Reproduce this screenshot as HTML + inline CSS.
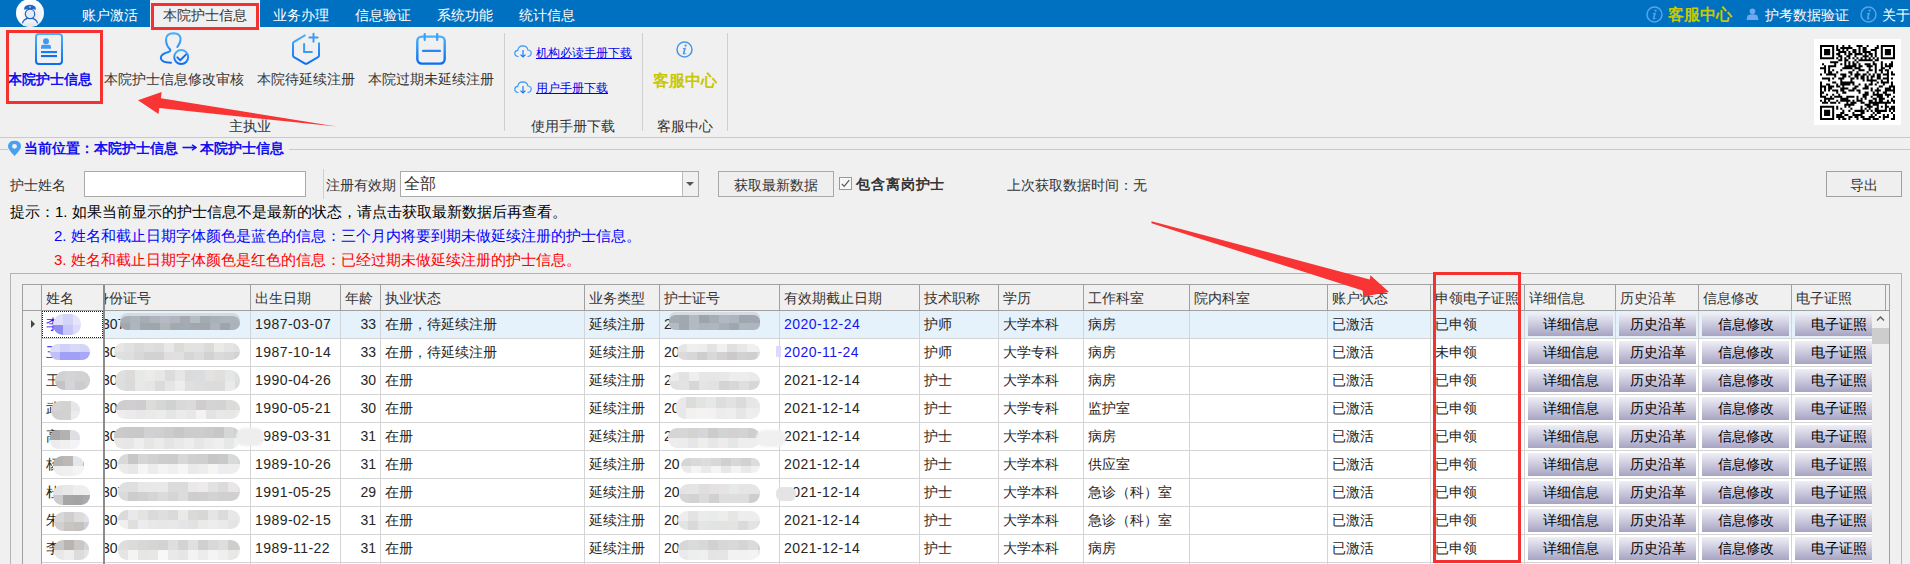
<!DOCTYPE html><html><head><meta charset="utf-8"><style>
*{box-sizing:border-box;margin:0;padding:0}
html,body{width:1910px;height:564px;overflow:hidden;background:#f0f0f0;font-family:"Liberation Sans",sans-serif;color:#333;position:relative}
.ab{position:absolute;white-space:nowrap}
.t14{font-size:14px;line-height:16px}
.vl{position:absolute;width:1px;background:#d4d4d4}
.hl{position:absolute;height:1px;background:#d4d4d4}
.btn{position:absolute;height:23px;background:linear-gradient(#efeff7,#a7a4c3);font-size:14px;line-height:22px;text-align:center;color:#000}
.cell{position:absolute;font-size:14px;line-height:16px;color:#262626;white-space:nowrap}
.hd{position:absolute;font-size:14px;line-height:16px;color:#333;white-space:nowrap}
.blur{position:absolute;border-radius:9px;filter:blur(1.2px)}
</style></head><body>

<div class="ab" style="left:0;top:0;width:1910px;height:27px;background:#0071c1"></div>
<svg class="ab" style="left:14px;top:-1px" width="32" height="29" viewBox="0 0 32 29">
<defs><radialGradient id="av" cx="0.62" cy="0.62" r="0.55"><stop offset="0" stop-color="#e4e8ef"/><stop offset="1" stop-color="#fff"/></radialGradient>
<linearGradient id="bd" x1="0" y1="0" x2="0" y2="1"><stop offset="0" stop-color="#f4f6f9"/><stop offset="1" stop-color="#e0e4ea"/></linearGradient></defs>
<circle cx="16" cy="14" r="14" fill="url(#av)"/>
<path d="M9 27 L9.3 24 A8.2 7.6 0 0 1 22.7 24 L23 27 Z" fill="url(#bd)"/>
<path d="M8.3 24.2 A8.2 7.6 0 0 1 23.7 24.2" fill="none" stroke="#1f66c4" stroke-width="1.3"/>
<circle cx="16" cy="14.9" r="4.7" fill="#e6ebf3" stroke="#1f66c4" stroke-width="1.2"/>
<path d="M10.2 10.8 Q9.4 6.2 16 5.8 Q22.6 6.2 21.8 10.8 Q16 9.2 10.2 10.8 Z" fill="#1f66c4"/>
<ellipse cx="16" cy="7.9" rx="1.1" ry="0.9" fill="#9cc0ee"/>
</svg>
<div class="ab t14" style="left:82px;top:7px;color:#fff">账户激活</div>
<div class="ab t14" style="left:273px;top:7px;color:#fff">业务办理</div>
<div class="ab t14" style="left:355px;top:7px;color:#fff">信息验证</div>
<div class="ab t14" style="left:437px;top:7px;color:#fff">系统功能</div>
<div class="ab t14" style="left:519px;top:7px;color:#fff">统计信息</div>
<div class="ab" style="left:150px;top:0;width:110px;height:27px;background:#f0f0f0"></div>
<div class="ab t14" style="left:163px;top:7px;color:#333">本院护士信息</div>
<div class="ab" style="left:151px;top:3px;width:108px;height:27px;border:3px solid #f5312f"></div>
<svg class="ab" style="left:1646px;top:6px" width="17" height="17" viewBox="0 0 17 17"><circle cx="8.5" cy="8.5" r="7.5" fill="none" stroke="#5aa2ea" stroke-width="1.5" opacity="1"/><circle cx="9.6" cy="4.6" r="1.15" fill="#5aa2ea"/><path d="M7 7 L10 6.8 L8.6 11.8 Q8.4 12.6 9.2 12.4 L10.2 11.8 L10.3 12.4 Q9 13.5 7.6 13.5 Q6.5 13.4 6.9 12 L7.9 8 L6.9 8 Z" fill="#5aa2ea"/></svg>
<div class="ab" style="left:1668px;top:6px;font-size:16px;line-height:18px;font-weight:bold;color:#c8c800">客服中心</div>
<svg class="ab" style="left:1746px;top:8px" width="13" height="12" viewBox="0 0 13 12"><circle cx="6.5" cy="3.2" r="2.8" fill="#6fa8ee"/><path d="M0.5 12 L1.5 7.5 Q6.5 5 11.5 7.5 L12.5 12 Z" fill="#6fa8ee"/></svg>
<div class="ab t14" style="left:1765px;top:7px;color:#fff">护考数据验证</div>
<svg class="ab" style="left:1860px;top:6px" width="17" height="17" viewBox="0 0 17 17"><circle cx="8.5" cy="8.5" r="7.5" fill="none" stroke="#5aa2ea" stroke-width="1.5" opacity="1"/><circle cx="9.6" cy="4.6" r="1.15" fill="#5aa2ea"/><path d="M7 7 L10 6.8 L8.6 11.8 Q8.4 12.6 9.2 12.4 L10.2 11.8 L10.3 12.4 Q9 13.5 7.6 13.5 Q6.5 13.4 6.9 12 L7.9 8 L6.9 8 Z" fill="#5aa2ea"/></svg>
<div class="ab t14" style="left:1882px;top:7px;color:#fff">关于</div>
<div class="ab" style="left:0;top:137px;width:1910px;height:1px;background:#c9c9c9"></div>
<svg class="ab" style="left:34px;top:32px" width="30" height="34" viewBox="0 0 30 34">
<defs><linearGradient id="g1" x1="0" y1="0" x2="0" y2="1"><stop offset="0" stop-color="#4bb0fb"/><stop offset="1" stop-color="#0b6df0"/></linearGradient></defs>
<rect x="2" y="2" width="26" height="30" rx="3" fill="none" stroke="url(#g1)" stroke-width="2"/>
<circle cx="12" cy="9.2" r="3" fill="#3d9bf7"/>
<path d="M7 16.8 L7 14.5 Q7 12.8 9 12.8 L15 12.8 Q17 12.8 17 14.5 L17 16.8 Z" fill="#3d9bf7"/>
<rect x="7" y="19" width="16" height="2.1" fill="#1c7af2"/>
<rect x="7" y="23" width="16" height="2.1" fill="#1070f0"/>
</svg>
<svg class="ab" style="left:156px;top:30px" width="36" height="36" viewBox="0 0 36 36">
<defs><linearGradient id="g2" x1="0" y1="0" x2="0" y2="1"><stop offset="0" stop-color="#4bb0fb"/><stop offset="1" stop-color="#0b6df0"/></linearGradient></defs>
<path d="M21.3 17 Q25 12 24.5 8 Q23.5 3.3 17 3.3 Q10.3 3.5 10 9.5 Q10 15.5 14.2 19.5 Q14.6 21.3 12.5 22 Q4.8 24 4.8 28 Q5 32.5 15 32.8" fill="none" stroke="url(#g2)" stroke-width="2" stroke-linecap="round"/>
<circle cx="25.2" cy="27.1" r="7" fill="none" stroke="url(#g2)" stroke-width="2"/>
<path d="M21.3 27.4 L24.2 30.3 L29.9 24.6" fill="none" stroke="#1070f0" stroke-width="2" stroke-linecap="round" stroke-linejoin="round"/>
</svg>
<svg class="ab" style="left:288px;top:30px" width="36" height="36" viewBox="0 0 36 36">
<defs><linearGradient id="g3" x1="0" y1="0" x2="0" y2="1"><stop offset="0" stop-color="#4bb0fb"/><stop offset="1" stop-color="#0b6df0"/></linearGradient></defs>
<path d="M16.8 5.4 L6 11.8 Q5 12.4 5 13.5 L5 25.5 Q5 26.6 6 27.2 L17 33.6 Q18 34.1 19 33.6 L30 27.2 Q31 26.6 31 25.5 L31 13.2" fill="none" stroke="url(#g3)" stroke-width="2" stroke-linecap="round"/>
<path d="M25.5 3.7 L25.5 11.8 M21.4 7.6 L29.6 7.6" stroke="#3d9bf7" stroke-width="2" stroke-linecap="round"/>
<path d="M16.1 14 L16.1 22.1 L23.9 22.1" fill="none" stroke="#3d9bf7" stroke-width="2" stroke-linecap="round"/>
</svg>
<svg class="ab" style="left:412px;top:30px" width="38" height="38" viewBox="0 0 38 38">
<defs><linearGradient id="g4" x1="0" y1="0" x2="0" y2="1"><stop offset="0" stop-color="#4bb0fb"/><stop offset="1" stop-color="#0b6df0"/></linearGradient></defs>
<rect x="5.3" y="6.6" width="27.4" height="27" rx="4.5" fill="none" stroke="url(#g4)" stroke-width="2.4"/>
<path d="M12.7 4 L12.7 10 M25.2 4 L25.2 10" stroke="#3aa0fa" stroke-width="2.2" stroke-linecap="round"/>
<path d="M11 20.9 L28 20.9" stroke="#2a86f6" stroke-width="2.2" stroke-linecap="round"/>
</svg>
<div class="ab" style="left:8px;top:71px;font-size:14px;line-height:16px;font-weight:bold;color:#1010f0">本院护士信息</div>
<div class="ab t14" style="left:104px;top:71px">本院护士信息修改审核</div>
<div class="ab t14" style="left:257px;top:71px">本院待延续注册</div>
<div class="ab t14" style="left:368px;top:71px">本院过期未延续注册</div>
<div class="ab t14" style="left:229px;top:118px">主执业</div>
<div class="ab" style="left:6px;top:30px;width:97px;height:74px;border:3px solid #f5312f"></div>
<div class="ab" style="left:504px;top:33px;width:1px;height:98px;background:#cfcfcf"></div>
<div class="ab" style="left:642px;top:33px;width:1px;height:98px;background:#cfcfcf"></div>
<div class="ab" style="left:727px;top:33px;width:1px;height:98px;background:#cfcfcf"></div>
<svg class="ab" style="left:514px;top:45px" width="18" height="13" viewBox="0 0 18 13"><path d="M4.5 11.5 Q0.8 11.3 0.8 8.3 Q0.9 5.6 3.7 5.4 Q4.3 0.8 9 0.8 Q13.3 0.9 13.9 5 Q17.2 5.3 17.2 8.3 Q17 11.3 13.5 11.5" fill="none" stroke="#3d9bf7" stroke-width="1.2"/><path d="M9 5 L9 12 M6.5 9.6 L9 12 L11.5 9.6" fill="none" stroke="#1c7af2" stroke-width="1.2"/></svg>
<svg class="ab" style="left:514px;top:81px" width="18" height="13" viewBox="0 0 18 13"><path d="M4.5 11.5 Q0.8 11.3 0.8 8.3 Q0.9 5.6 3.7 5.4 Q4.3 0.8 9 0.8 Q13.3 0.9 13.9 5 Q17.2 5.3 17.2 8.3 Q17 11.3 13.5 11.5" fill="none" stroke="#3d9bf7" stroke-width="1.2"/><path d="M9 5 L9 12 M6.5 9.6 L9 12 L11.5 9.6" fill="none" stroke="#1c7af2" stroke-width="1.2"/></svg>
<div class="ab" style="left:536px;top:46px;font-size:12px;line-height:14px;color:#0000ee;text-decoration:underline">机构必读手册下载</div>
<div class="ab" style="left:536px;top:81px;font-size:12px;line-height:14px;color:#0000ee;text-decoration:underline">用户手册下载</div>
<div class="ab t14" style="left:531px;top:118px">使用手册下载</div>
<svg class="ab" style="left:676px;top:41px" width="17" height="17" viewBox="0 0 17 17"><circle cx="8.5" cy="8.5" r="7.5" fill="none" stroke="#4a98ea" stroke-width="1.5" opacity="1"/><circle cx="9.6" cy="4.6" r="1.15" fill="#4a98ea"/><path d="M7 7 L10 6.8 L8.6 11.8 Q8.4 12.6 9.2 12.4 L10.2 11.8 L10.3 12.4 Q9 13.5 7.6 13.5 Q6.5 13.4 6.9 12 L7.9 8 L6.9 8 Z" fill="#4a98ea"/></svg>
<div class="ab" style="left:653px;top:72px;font-size:16px;line-height:18px;font-weight:bold;color:#c8c800">客服中心</div>
<div class="ab t14" style="left:657px;top:118px">客服中心</div>
<div class="ab" style="left:1814px;top:39px;width:87px;height:86px;background:#fff"></div>
<svg class="ab" style="left:1820px;top:45px" width="75" height="75" viewBox="0 0 37 37"><path d="M0 0h1v1h-1zM1 0h1v1h-1zM2 0h1v1h-1zM3 0h1v1h-1zM4 0h1v1h-1zM5 0h1v1h-1zM6 0h1v1h-1zM8 0h1v1h-1zM11 0h1v1h-1zM14 0h1v1h-1zM18 0h1v1h-1zM19 0h1v1h-1zM20 0h1v1h-1zM23 0h1v1h-1zM28 0h1v1h-1zM30 0h1v1h-1zM31 0h1v1h-1zM32 0h1v1h-1zM33 0h1v1h-1zM34 0h1v1h-1zM35 0h1v1h-1zM36 0h1v1h-1zM0 1h1v1h-1zM6 1h1v1h-1zM8 1h1v1h-1zM10 1h1v1h-1zM11 1h1v1h-1zM12 1h1v1h-1zM13 1h1v1h-1zM14 1h1v1h-1zM15 1h1v1h-1zM19 1h1v1h-1zM21 1h1v1h-1zM22 1h1v1h-1zM27 1h1v1h-1zM28 1h1v1h-1zM30 1h1v1h-1zM36 1h1v1h-1zM0 2h1v1h-1zM2 2h1v1h-1zM3 2h1v1h-1zM4 2h1v1h-1zM6 2h1v1h-1zM8 2h1v1h-1zM9 2h1v1h-1zM11 2h1v1h-1zM13 2h1v1h-1zM16 2h1v1h-1zM17 2h1v1h-1zM19 2h1v1h-1zM21 2h1v1h-1zM22 2h1v1h-1zM25 2h1v1h-1zM26 2h1v1h-1zM27 2h1v1h-1zM30 2h1v1h-1zM32 2h1v1h-1zM33 2h1v1h-1zM34 2h1v1h-1zM36 2h1v1h-1zM0 3h1v1h-1zM2 3h1v1h-1zM3 3h1v1h-1zM4 3h1v1h-1zM6 3h1v1h-1zM9 3h1v1h-1zM10 3h1v1h-1zM11 3h1v1h-1zM12 3h1v1h-1zM14 3h1v1h-1zM16 3h1v1h-1zM17 3h1v1h-1zM19 3h1v1h-1zM21 3h1v1h-1zM22 3h1v1h-1zM23 3h1v1h-1zM24 3h1v1h-1zM27 3h1v1h-1zM30 3h1v1h-1zM32 3h1v1h-1zM33 3h1v1h-1zM34 3h1v1h-1zM36 3h1v1h-1zM0 4h1v1h-1zM2 4h1v1h-1zM3 4h1v1h-1zM4 4h1v1h-1zM6 4h1v1h-1zM8 4h1v1h-1zM9 4h1v1h-1zM12 4h1v1h-1zM14 4h1v1h-1zM15 4h1v1h-1zM17 4h1v1h-1zM18 4h1v1h-1zM19 4h1v1h-1zM20 4h1v1h-1zM22 4h1v1h-1zM24 4h1v1h-1zM25 4h1v1h-1zM27 4h1v1h-1zM30 4h1v1h-1zM32 4h1v1h-1zM33 4h1v1h-1zM34 4h1v1h-1zM36 4h1v1h-1zM0 5h1v1h-1zM6 5h1v1h-1zM9 5h1v1h-1zM10 5h1v1h-1zM13 5h1v1h-1zM14 5h1v1h-1zM17 5h1v1h-1zM21 5h1v1h-1zM22 5h1v1h-1zM23 5h1v1h-1zM25 5h1v1h-1zM27 5h1v1h-1zM30 5h1v1h-1zM36 5h1v1h-1zM0 6h1v1h-1zM1 6h1v1h-1zM2 6h1v1h-1zM3 6h1v1h-1zM4 6h1v1h-1zM5 6h1v1h-1zM6 6h1v1h-1zM8 6h1v1h-1zM10 6h1v1h-1zM12 6h1v1h-1zM14 6h1v1h-1zM16 6h1v1h-1zM18 6h1v1h-1zM20 6h1v1h-1zM22 6h1v1h-1zM24 6h1v1h-1zM26 6h1v1h-1zM28 6h1v1h-1zM30 6h1v1h-1zM31 6h1v1h-1zM32 6h1v1h-1zM33 6h1v1h-1zM34 6h1v1h-1zM35 6h1v1h-1zM36 6h1v1h-1zM9 7h1v1h-1zM10 7h1v1h-1zM12 7h1v1h-1zM13 7h1v1h-1zM17 7h1v1h-1zM19 7h1v1h-1zM20 7h1v1h-1zM21 7h1v1h-1zM22 7h1v1h-1zM23 7h1v1h-1zM24 7h1v1h-1zM25 7h1v1h-1zM27 7h1v1h-1zM28 7h1v1h-1zM5 8h1v1h-1zM6 8h1v1h-1zM7 8h1v1h-1zM8 8h1v1h-1zM12 8h1v1h-1zM14 8h1v1h-1zM16 8h1v1h-1zM18 8h1v1h-1zM26 8h1v1h-1zM30 8h1v1h-1zM35 8h1v1h-1zM1 9h1v1h-1zM7 9h1v1h-1zM10 9h1v1h-1zM12 9h1v1h-1zM14 9h1v1h-1zM16 9h1v1h-1zM17 9h1v1h-1zM19 9h1v1h-1zM22 9h1v1h-1zM23 9h1v1h-1zM24 9h1v1h-1zM26 9h1v1h-1zM27 9h1v1h-1zM30 9h1v1h-1zM32 9h1v1h-1zM34 9h1v1h-1zM35 9h1v1h-1zM2 10h1v1h-1zM4 10h1v1h-1zM5 10h1v1h-1zM6 10h1v1h-1zM7 10h1v1h-1zM12 10h1v1h-1zM13 10h1v1h-1zM14 10h1v1h-1zM15 10h1v1h-1zM16 10h1v1h-1zM17 10h1v1h-1zM19 10h1v1h-1zM20 10h1v1h-1zM23 10h1v1h-1zM24 10h1v1h-1zM25 10h1v1h-1zM27 10h1v1h-1zM30 10h1v1h-1zM32 10h1v1h-1zM33 10h1v1h-1zM34 10h1v1h-1zM35 10h1v1h-1zM0 11h1v1h-1zM1 11h1v1h-1zM2 11h1v1h-1zM4 11h1v1h-1zM11 11h1v1h-1zM12 11h1v1h-1zM13 11h1v1h-1zM14 11h1v1h-1zM15 11h1v1h-1zM17 11h1v1h-1zM18 11h1v1h-1zM19 11h1v1h-1zM24 11h1v1h-1zM27 11h1v1h-1zM30 11h1v1h-1zM31 11h1v1h-1zM34 11h1v1h-1zM2 12h1v1h-1zM4 12h1v1h-1zM6 12h1v1h-1zM10 12h1v1h-1zM16 12h1v1h-1zM19 12h1v1h-1zM20 12h1v1h-1zM21 12h1v1h-1zM24 12h1v1h-1zM25 12h1v1h-1zM27 12h1v1h-1zM29 12h1v1h-1zM30 12h1v1h-1zM32 12h1v1h-1zM33 12h1v1h-1zM2 13h1v1h-1zM4 13h1v1h-1zM5 13h1v1h-1zM8 13h1v1h-1zM14 13h1v1h-1zM15 13h1v1h-1zM18 13h1v1h-1zM23 13h1v1h-1zM27 13h1v1h-1zM30 13h1v1h-1zM33 13h1v1h-1zM35 13h1v1h-1zM0 14h1v1h-1zM3 14h1v1h-1zM4 14h1v1h-1zM5 14h1v1h-1zM6 14h1v1h-1zM7 14h1v1h-1zM10 14h1v1h-1zM11 14h1v1h-1zM12 14h1v1h-1zM15 14h1v1h-1zM17 14h1v1h-1zM18 14h1v1h-1zM19 14h1v1h-1zM21 14h1v1h-1zM22 14h1v1h-1zM24 14h1v1h-1zM26 14h1v1h-1zM28 14h1v1h-1zM29 14h1v1h-1zM31 14h1v1h-1zM32 14h1v1h-1zM33 14h1v1h-1zM35 14h1v1h-1zM36 14h1v1h-1zM7 15h1v1h-1zM11 15h1v1h-1zM12 15h1v1h-1zM14 15h1v1h-1zM17 15h1v1h-1zM18 15h1v1h-1zM20 15h1v1h-1zM21 15h1v1h-1zM23 15h1v1h-1zM25 15h1v1h-1zM26 15h1v1h-1zM28 15h1v1h-1zM29 15h1v1h-1zM33 15h1v1h-1zM1 16h1v1h-1zM2 16h1v1h-1zM3 16h1v1h-1zM4 16h1v1h-1zM6 16h1v1h-1zM9 16h1v1h-1zM10 16h1v1h-1zM11 16h1v1h-1zM15 16h1v1h-1zM16 16h1v1h-1zM18 16h1v1h-1zM20 16h1v1h-1zM21 16h1v1h-1zM23 16h1v1h-1zM25 16h1v1h-1zM28 16h1v1h-1zM29 16h1v1h-1zM31 16h1v1h-1zM32 16h1v1h-1zM33 16h1v1h-1zM35 16h1v1h-1zM4 17h1v1h-1zM10 17h1v1h-1zM15 17h1v1h-1zM21 17h1v1h-1zM23 17h1v1h-1zM24 17h1v1h-1zM25 17h1v1h-1zM26 17h1v1h-1zM27 17h1v1h-1zM30 17h1v1h-1zM33 17h1v1h-1zM0 18h1v1h-1zM6 18h1v1h-1zM7 18h1v1h-1zM10 18h1v1h-1zM11 18h1v1h-1zM12 18h1v1h-1zM13 18h1v1h-1zM14 18h1v1h-1zM15 18h1v1h-1zM16 18h1v1h-1zM25 18h1v1h-1zM28 18h1v1h-1zM30 18h1v1h-1zM31 18h1v1h-1zM32 18h1v1h-1zM33 18h1v1h-1zM35 18h1v1h-1zM0 19h1v1h-1zM3 19h1v1h-1zM4 19h1v1h-1zM8 19h1v1h-1zM10 19h1v1h-1zM11 19h1v1h-1zM12 19h1v1h-1zM13 19h1v1h-1zM14 19h1v1h-1zM16 19h1v1h-1zM19 19h1v1h-1zM22 19h1v1h-1zM24 19h1v1h-1zM25 19h1v1h-1zM27 19h1v1h-1zM31 19h1v1h-1zM35 19h1v1h-1zM0 20h1v1h-1zM1 20h1v1h-1zM2 20h1v1h-1zM4 20h1v1h-1zM5 20h1v1h-1zM6 20h1v1h-1zM8 20h1v1h-1zM9 20h1v1h-1zM11 20h1v1h-1zM17 20h1v1h-1zM18 20h1v1h-1zM22 20h1v1h-1zM23 20h1v1h-1zM29 20h1v1h-1zM30 20h1v1h-1zM34 20h1v1h-1zM35 20h1v1h-1zM36 20h1v1h-1zM0 21h1v1h-1zM2 21h1v1h-1zM4 21h1v1h-1zM5 21h1v1h-1zM10 21h1v1h-1zM11 21h1v1h-1zM12 21h1v1h-1zM13 21h1v1h-1zM16 21h1v1h-1zM17 21h1v1h-1zM21 21h1v1h-1zM22 21h1v1h-1zM23 21h1v1h-1zM25 21h1v1h-1zM28 21h1v1h-1zM32 21h1v1h-1zM33 21h1v1h-1zM34 21h1v1h-1zM36 21h1v1h-1zM0 22h1v1h-1zM2 22h1v1h-1zM4 22h1v1h-1zM6 22h1v1h-1zM7 22h1v1h-1zM8 22h1v1h-1zM10 22h1v1h-1zM11 22h1v1h-1zM14 22h1v1h-1zM15 22h1v1h-1zM16 22h1v1h-1zM18 22h1v1h-1zM19 22h1v1h-1zM25 22h1v1h-1zM27 22h1v1h-1zM28 22h1v1h-1zM29 22h1v1h-1zM32 22h1v1h-1zM33 22h1v1h-1zM34 22h1v1h-1zM35 22h1v1h-1zM36 22h1v1h-1zM0 23h1v1h-1zM1 23h1v1h-1zM8 23h1v1h-1zM11 23h1v1h-1zM12 23h1v1h-1zM19 23h1v1h-1zM22 23h1v1h-1zM23 23h1v1h-1zM26 23h1v1h-1zM28 23h1v1h-1zM31 23h1v1h-1zM32 23h1v1h-1zM36 23h1v1h-1zM0 24h1v1h-1zM3 24h1v1h-1zM6 24h1v1h-1zM9 24h1v1h-1zM21 24h1v1h-1zM22 24h1v1h-1zM23 24h1v1h-1zM26 24h1v1h-1zM27 24h1v1h-1zM28 24h1v1h-1zM29 24h1v1h-1zM30 24h1v1h-1zM32 24h1v1h-1zM33 24h1v1h-1zM34 24h1v1h-1zM0 25h1v1h-1zM1 25h1v1h-1zM2 25h1v1h-1zM5 25h1v1h-1zM7 25h1v1h-1zM8 25h1v1h-1zM9 25h1v1h-1zM10 25h1v1h-1zM13 25h1v1h-1zM14 25h1v1h-1zM15 25h1v1h-1zM16 25h1v1h-1zM18 25h1v1h-1zM21 25h1v1h-1zM22 25h1v1h-1zM25 25h1v1h-1zM28 25h1v1h-1zM29 25h1v1h-1zM30 25h1v1h-1zM33 25h1v1h-1zM36 25h1v1h-1zM2 26h1v1h-1zM3 26h1v1h-1zM4 26h1v1h-1zM5 26h1v1h-1zM6 26h1v1h-1zM10 26h1v1h-1zM11 26h1v1h-1zM12 26h1v1h-1zM13 26h1v1h-1zM18 26h1v1h-1zM20 26h1v1h-1zM22 26h1v1h-1zM26 26h1v1h-1zM27 26h1v1h-1zM29 26h1v1h-1zM30 26h1v1h-1zM31 26h1v1h-1zM35 26h1v1h-1zM0 27h1v1h-1zM2 27h1v1h-1zM4 27h1v1h-1zM8 27h1v1h-1zM10 27h1v1h-1zM11 27h1v1h-1zM12 27h1v1h-1zM13 27h1v1h-1zM14 27h1v1h-1zM16 27h1v1h-1zM18 27h1v1h-1zM19 27h1v1h-1zM20 27h1v1h-1zM24 27h1v1h-1zM25 27h1v1h-1zM27 27h1v1h-1zM29 27h1v1h-1zM30 27h1v1h-1zM33 27h1v1h-1zM35 27h1v1h-1zM36 27h1v1h-1zM1 28h1v1h-1zM2 28h1v1h-1zM3 28h1v1h-1zM5 28h1v1h-1zM6 28h1v1h-1zM7 28h1v1h-1zM9 28h1v1h-1zM13 28h1v1h-1zM15 28h1v1h-1zM16 28h1v1h-1zM17 28h1v1h-1zM20 28h1v1h-1zM21 28h1v1h-1zM24 28h1v1h-1zM25 28h1v1h-1zM26 28h1v1h-1zM27 28h1v1h-1zM28 28h1v1h-1zM29 28h1v1h-1zM30 28h1v1h-1zM31 28h1v1h-1zM32 28h1v1h-1zM33 28h1v1h-1zM34 28h1v1h-1zM36 28h1v1h-1zM12 29h1v1h-1zM13 29h1v1h-1zM14 29h1v1h-1zM15 29h1v1h-1zM16 29h1v1h-1zM22 29h1v1h-1zM23 29h1v1h-1zM24 29h1v1h-1zM26 29h1v1h-1zM27 29h1v1h-1zM28 29h1v1h-1zM32 29h1v1h-1zM0 30h1v1h-1zM1 30h1v1h-1zM2 30h1v1h-1zM3 30h1v1h-1zM4 30h1v1h-1zM5 30h1v1h-1zM6 30h1v1h-1zM8 30h1v1h-1zM12 30h1v1h-1zM14 30h1v1h-1zM20 30h1v1h-1zM23 30h1v1h-1zM24 30h1v1h-1zM25 30h1v1h-1zM28 30h1v1h-1zM30 30h1v1h-1zM32 30h1v1h-1zM33 30h1v1h-1zM35 30h1v1h-1zM36 30h1v1h-1zM0 31h1v1h-1zM6 31h1v1h-1zM8 31h1v1h-1zM10 31h1v1h-1zM15 31h1v1h-1zM20 31h1v1h-1zM22 31h1v1h-1zM24 31h1v1h-1zM27 31h1v1h-1zM28 31h1v1h-1zM32 31h1v1h-1zM34 31h1v1h-1zM35 31h1v1h-1zM36 31h1v1h-1zM0 32h1v1h-1zM2 32h1v1h-1zM3 32h1v1h-1zM4 32h1v1h-1zM6 32h1v1h-1zM11 32h1v1h-1zM14 32h1v1h-1zM17 32h1v1h-1zM18 32h1v1h-1zM19 32h1v1h-1zM20 32h1v1h-1zM21 32h1v1h-1zM23 32h1v1h-1zM25 32h1v1h-1zM27 32h1v1h-1zM28 32h1v1h-1zM29 32h1v1h-1zM30 32h1v1h-1zM31 32h1v1h-1zM32 32h1v1h-1zM34 32h1v1h-1zM36 32h1v1h-1zM0 33h1v1h-1zM2 33h1v1h-1zM3 33h1v1h-1zM4 33h1v1h-1zM6 33h1v1h-1zM10 33h1v1h-1zM11 33h1v1h-1zM16 33h1v1h-1zM20 33h1v1h-1zM21 33h1v1h-1zM26 33h1v1h-1zM28 33h1v1h-1zM29 33h1v1h-1zM35 33h1v1h-1zM0 34h1v1h-1zM2 34h1v1h-1zM3 34h1v1h-1zM4 34h1v1h-1zM6 34h1v1h-1zM8 34h1v1h-1zM9 34h1v1h-1zM10 34h1v1h-1zM12 34h1v1h-1zM13 34h1v1h-1zM16 34h1v1h-1zM17 34h1v1h-1zM18 34h1v1h-1zM19 34h1v1h-1zM20 34h1v1h-1zM25 34h1v1h-1zM27 34h1v1h-1zM31 34h1v1h-1zM33 34h1v1h-1zM36 34h1v1h-1zM0 35h1v1h-1zM6 35h1v1h-1zM8 35h1v1h-1zM9 35h1v1h-1zM10 35h1v1h-1zM11 35h1v1h-1zM14 35h1v1h-1zM15 35h1v1h-1zM17 35h1v1h-1zM18 35h1v1h-1zM20 35h1v1h-1zM21 35h1v1h-1zM24 35h1v1h-1zM25 35h1v1h-1zM26 35h1v1h-1zM29 35h1v1h-1zM31 35h1v1h-1zM32 35h1v1h-1zM33 35h1v1h-1zM36 35h1v1h-1zM0 36h1v1h-1zM1 36h1v1h-1zM2 36h1v1h-1zM3 36h1v1h-1zM4 36h1v1h-1zM5 36h1v1h-1zM6 36h1v1h-1zM9 36h1v1h-1zM11 36h1v1h-1zM12 36h1v1h-1zM14 36h1v1h-1zM18 36h1v1h-1zM21 36h1v1h-1zM22 36h1v1h-1zM23 36h1v1h-1zM24 36h1v1h-1zM26 36h1v1h-1zM27 36h1v1h-1zM28 36h1v1h-1zM31 36h1v1h-1zM35 36h1v1h-1zM36 36h1v1h-1z" fill="#000"/></svg>
<div class="ab" style="left:0;top:149px;width:8px;height:1px;background:#c9c9c9"></div>
<div class="ab" style="left:289px;top:149px;width:1621px;height:1px;background:#c9c9c9"></div>
<svg class="ab" style="left:7px;top:140px" width="15" height="17" viewBox="0 0 15 17"><path d="M7.5 16 Q1 9.5 1 6.5 Q1 0.8 7.5 0.8 Q14 0.8 14 6.5 Q14 9.5 7.5 16 Z" fill="#4aa0f0"/><circle cx="7.5" cy="6.3" r="2.4" fill="#f0f0f0"/></svg>
<div class="ab" style="left:24px;top:140px;font-size:14px;line-height:16px;font-weight:bold;color:#1010f0">当前位置：本院护士信息</div>
<svg class="ab" style="left:182px;top:144px" width="15" height="7" viewBox="0 0 15 7"><path d="M0.5 3.5 L13 3.5" stroke="#1010f0" stroke-width="1.6"/><path d="M10 0.8 L14 3.5 L10 6.2" fill="none" stroke="#1010f0" stroke-width="1.5"/></svg>
<div class="ab" style="left:200px;top:140px;font-size:14px;line-height:16px;font-weight:bold;color:#1010f0">本院护士信息</div>
<div class="ab t14" style="left:10px;top:177px">护士姓名</div>
<div class="ab" style="left:84px;top:171px;width:222px;height:26px;background:#fff;border:1px solid #a9a9a9"></div>
<div class="ab" style="left:323px;top:169px;width:1px;height:30px;background:#cfcfcf"></div>
<div class="ab t14" style="left:326px;top:177px">注册有效期</div>
<div class="ab" style="left:400px;top:171px;width:299px;height:26px;background:#fff;border:1px solid #a9a9a9"></div>
<div class="ab" style="left:682px;top:172px;width:16px;height:24px;background:#f0f0f0;border-left:1px solid #b9b9b9"></div>
<div class="ab" style="left:686px;top:182px;width:0;height:0;border-left:4px solid transparent;border-right:4px solid transparent;border-top:4px solid #555"></div>
<div class="ab" style="left:404px;top:175px;font-size:16px;line-height:18px;color:#333">全部</div>
<div class="ab" style="left:718px;top:171px;width:116px;height:26px;background:#efefef;border:1px solid #a9a9a9"></div>
<div class="ab t14" style="left:734px;top:177px">获取最新数据</div>
<div class="ab" style="left:839px;top:177px;width:13px;height:13px;background:#f8f8f8;border:1px solid #9a9a9a"></div>
<svg class="ab" style="left:839px;top:177px" width="13" height="13" viewBox="0 0 13 13"><path d="M2.8 6.8 L5.2 9.4 L10.2 3.2" fill="none" stroke="#555" stroke-width="1.2"/></svg>
<div class="ab" style="left:856px;top:176px;font-size:14px;line-height:16px;letter-spacing:0.9px;font-weight:bold;color:#333">包含离岗护士</div>
<div class="ab t14" style="left:1007px;top:177px">上次获取数据时间：无</div>
<div class="ab" style="left:1826px;top:171px;width:76px;height:26px;background:#efefef;border:1px solid #a0a0a0"></div>
<div class="ab t14" style="left:1850px;top:177px">导出</div>
<div class="ab" style="left:10px;top:203px;font-size:15px;line-height:17px;color:#000">提示：1. 如果当前显示的护士信息不是最新的状态，请点击获取最新数据后再查看。</div>
<div class="ab" style="left:54px;top:227px;font-size:15px;line-height:17px;color:#0000ff">2. 姓名和截止日期字体颜色是蓝色的信息：三个月内将要到期未做延续注册的护士信息。</div>
<div class="ab" style="left:54px;top:251px;font-size:15px;line-height:17px;color:#ff0000">3. 姓名和截止日期字体颜色是红色的信息：已经过期未做延续注册的护士信息。</div>
<div class="ab" style="left:10px;top:273px;width:1892px;height:300px;border:1px solid #b4b4b4;border-bottom:none"></div>
<div class="ab" style="left:22px;top:284px;width:1868px;height:290px;background:#fff;border:1px solid #a0a0a0;border-bottom:none"></div>
<div class="ab" style="left:23px;top:285px;width:1866px;height:25px;background:#f0f0f0"></div>
<div class="ab" style="left:23px;top:310px;width:1866px;height:1px;background:#a0a0a0"></div>
<div class="ab" style="left:23px;top:311px;width:18px;height:260px;background:#f0f0f0"></div>
<div class="ab" style="left:41px;top:285px;width:1px;height:290px;background:#a0a0a0"></div>
<div class="ab" style="left:104px;top:311px;width:1768px;height:27px;background:#e5f1fb"></div>
<div class="hl" style="left:42px;top:338px;width:1830px"></div>
<div class="hl" style="left:42px;top:366px;width:1830px"></div>
<div class="hl" style="left:42px;top:394px;width:1830px"></div>
<div class="hl" style="left:42px;top:422px;width:1830px"></div>
<div class="hl" style="left:42px;top:450px;width:1830px"></div>
<div class="hl" style="left:42px;top:478px;width:1830px"></div>
<div class="hl" style="left:42px;top:506px;width:1830px"></div>
<div class="hl" style="left:42px;top:534px;width:1830px"></div>
<div class="hl" style="left:42px;top:562px;width:1830px"></div>
<div class="hl" style="left:42px;top:590px;width:1830px"></div>
<div class="vl" style="left:250px;top:311px;height:260px"></div>
<div class="vl" style="left:340px;top:311px;height:260px"></div>
<div class="vl" style="left:380px;top:311px;height:260px"></div>
<div class="vl" style="left:584px;top:311px;height:260px"></div>
<div class="vl" style="left:659px;top:311px;height:260px"></div>
<div class="vl" style="left:779px;top:311px;height:260px"></div>
<div class="vl" style="left:919px;top:311px;height:260px"></div>
<div class="vl" style="left:998px;top:311px;height:260px"></div>
<div class="vl" style="left:1083px;top:311px;height:260px"></div>
<div class="vl" style="left:1189px;top:311px;height:260px"></div>
<div class="vl" style="left:1327px;top:311px;height:260px"></div>
<div class="vl" style="left:1430px;top:311px;height:260px"></div>
<div class="vl" style="left:1524px;top:311px;height:260px"></div>
<div class="vl" style="left:1615px;top:311px;height:260px"></div>
<div class="vl" style="left:1698px;top:311px;height:260px"></div>
<div class="vl" style="left:1791px;top:311px;height:260px"></div>
<div class="vl" style="left:1885px;top:311px;height:260px"></div>
<div class="ab" style="left:103px;top:285px;width:1px;height:25px;background:#a0a0a0"></div>
<div class="ab" style="left:250px;top:285px;width:1px;height:25px;background:#a0a0a0"></div>
<div class="ab" style="left:340px;top:285px;width:1px;height:25px;background:#a0a0a0"></div>
<div class="ab" style="left:380px;top:285px;width:1px;height:25px;background:#a0a0a0"></div>
<div class="ab" style="left:584px;top:285px;width:1px;height:25px;background:#a0a0a0"></div>
<div class="ab" style="left:659px;top:285px;width:1px;height:25px;background:#a0a0a0"></div>
<div class="ab" style="left:779px;top:285px;width:1px;height:25px;background:#a0a0a0"></div>
<div class="ab" style="left:919px;top:285px;width:1px;height:25px;background:#a0a0a0"></div>
<div class="ab" style="left:998px;top:285px;width:1px;height:25px;background:#a0a0a0"></div>
<div class="ab" style="left:1083px;top:285px;width:1px;height:25px;background:#a0a0a0"></div>
<div class="ab" style="left:1189px;top:285px;width:1px;height:25px;background:#a0a0a0"></div>
<div class="ab" style="left:1327px;top:285px;width:1px;height:25px;background:#a0a0a0"></div>
<div class="ab" style="left:1430px;top:285px;width:1px;height:25px;background:#a0a0a0"></div>
<div class="ab" style="left:1524px;top:285px;width:1px;height:25px;background:#a0a0a0"></div>
<div class="ab" style="left:1615px;top:285px;width:1px;height:25px;background:#a0a0a0"></div>
<div class="ab" style="left:1698px;top:285px;width:1px;height:25px;background:#a0a0a0"></div>
<div class="ab" style="left:1791px;top:285px;width:1px;height:25px;background:#a0a0a0"></div>
<div class="ab" style="left:1885px;top:285px;width:1px;height:25px;background:#a0a0a0"></div>
<div class="hd" style="left:46px;top:290px">姓名</div>
<div class="hd" style="left:95px;top:290px">身份证号</div>
<div class="hd" style="left:255px;top:290px">出生日期</div>
<div class="hd" style="left:345px;top:290px">年龄</div>
<div class="hd" style="left:385px;top:290px">执业状态</div>
<div class="hd" style="left:589px;top:290px">业务类型</div>
<div class="hd" style="left:664px;top:290px">护士证号</div>
<div class="hd" style="left:784px;top:290px">有效期截止日期</div>
<div class="hd" style="left:924px;top:290px">技术职称</div>
<div class="hd" style="left:1003px;top:290px">学历</div>
<div class="hd" style="left:1088px;top:290px">工作科室</div>
<div class="hd" style="left:1194px;top:290px">院内科室</div>
<div class="hd" style="left:1332px;top:290px">账户状态</div>
<div class="hd" style="left:1435px;top:290px">申领电子证照</div>
<div class="hd" style="left:1529px;top:290px">详细信息</div>
<div class="hd" style="left:1620px;top:290px">历史沿革</div>
<div class="hd" style="left:1703px;top:290px">信息修改</div>
<div class="hd" style="left:1796px;top:290px">电子证照</div>
<div class="ab" style="left:42px;top:285px;width:61px;height:25px;background:#f0f0f0"></div>
<div class="hd" style="left:46px;top:290px">姓名</div>
<div class="ab" style="left:103px;top:285px;width:2px;height:290px;background:#8c8c8c"></div>
<div class="cell" style="left:46px;top:316px;color:#1414f0;">李</div>
<div class="ab" style="left:105px;top:311px;width:140px;height:27px;overflow:hidden"><div class="cell" style="left:-3px;top:5px;color:#262626">307</div></div>
<div class="cell" style="left:255px;top:316px;color:#262626;letter-spacing:0.45px;">1987-03-07</div>
<div class="cell" style="left:340px;top:316px;width:36px;text-align:right;color:#262626">33</div>
<div class="cell" style="left:385px;top:316px;color:#262626;">在册，待延续注册</div>
<div class="cell" style="left:589px;top:316px;color:#262626;">延续注册</div>
<div class="cell" style="left:664px;top:316px;color:#262626;">2</div>
<div class="cell" style="left:784px;top:316px;color:#1414f0;letter-spacing:0.45px;">2020-12-24</div>
<div class="cell" style="left:924px;top:316px;color:#262626;">护师</div>
<div class="cell" style="left:1003px;top:316px;color:#262626;">大学本科</div>
<div class="cell" style="left:1088px;top:316px;color:#262626;">病房</div>
<div class="cell" style="left:1332px;top:316px;color:#262626;">已激活</div>
<div class="cell" style="left:1435px;top:316px;color:#262626;">已申领</div>
<div class="btn" style="left:1528px;top:313px;width:85px">详细信息</div>
<div class="btn" style="left:1619px;top:313px;width:77px">历史沿革</div>
<div class="btn" style="left:1702px;top:313px;width:87px">信息修改</div>
<div class="btn" style="left:1795px;top:313px;width:77px;text-align:right;padding-right:5px">电子证照</div>
<div class="ab" style="left:1872px;top:311px;width:1px;height:0"></div>
<div class="cell" style="left:46px;top:344px;color:#1414f0;">王</div>
<div class="ab" style="left:105px;top:339px;width:140px;height:27px;overflow:hidden"><div class="cell" style="left:-3px;top:5px;color:#262626">30</div></div>
<div class="cell" style="left:255px;top:344px;color:#262626;letter-spacing:0.45px;">1987-10-14</div>
<div class="cell" style="left:340px;top:344px;width:36px;text-align:right;color:#262626">33</div>
<div class="cell" style="left:385px;top:344px;color:#262626;">在册，待延续注册</div>
<div class="cell" style="left:589px;top:344px;color:#262626;">延续注册</div>
<div class="cell" style="left:664px;top:344px;color:#262626;">20</div>
<div class="cell" style="left:784px;top:344px;color:#1414f0;letter-spacing:0.45px;">2020-11-24</div>
<div class="cell" style="left:924px;top:344px;color:#262626;">护师</div>
<div class="cell" style="left:1003px;top:344px;color:#262626;">大学专科</div>
<div class="cell" style="left:1088px;top:344px;color:#262626;">病房</div>
<div class="cell" style="left:1332px;top:344px;color:#262626;">已激活</div>
<div class="cell" style="left:1435px;top:344px;color:#262626;">未申领</div>
<div class="btn" style="left:1528px;top:341px;width:85px">详细信息</div>
<div class="btn" style="left:1619px;top:341px;width:77px">历史沿革</div>
<div class="btn" style="left:1702px;top:341px;width:87px">信息修改</div>
<div class="btn" style="left:1795px;top:341px;width:77px;text-align:right;padding-right:5px">电子证照</div>
<div class="ab" style="left:1872px;top:339px;width:1px;height:0"></div>
<div class="cell" style="left:46px;top:372px;color:#262626;">王</div>
<div class="ab" style="left:105px;top:367px;width:140px;height:27px;overflow:hidden"><div class="cell" style="left:-3px;top:5px;color:#262626">30</div></div>
<div class="cell" style="left:255px;top:372px;color:#262626;letter-spacing:0.45px;">1990-04-26</div>
<div class="cell" style="left:340px;top:372px;width:36px;text-align:right;color:#262626">30</div>
<div class="cell" style="left:385px;top:372px;color:#262626;">在册</div>
<div class="cell" style="left:589px;top:372px;color:#262626;">延续注册</div>
<div class="cell" style="left:664px;top:372px;color:#262626;">2</div>
<div class="cell" style="left:784px;top:372px;color:#262626;letter-spacing:0.45px;">2021-12-14</div>
<div class="cell" style="left:924px;top:372px;color:#262626;">护士</div>
<div class="cell" style="left:1003px;top:372px;color:#262626;">大学本科</div>
<div class="cell" style="left:1088px;top:372px;color:#262626;">病房</div>
<div class="cell" style="left:1332px;top:372px;color:#262626;">已激活</div>
<div class="cell" style="left:1435px;top:372px;color:#262626;">已申领</div>
<div class="btn" style="left:1528px;top:369px;width:85px">详细信息</div>
<div class="btn" style="left:1619px;top:369px;width:77px">历史沿革</div>
<div class="btn" style="left:1702px;top:369px;width:87px">信息修改</div>
<div class="btn" style="left:1795px;top:369px;width:77px;text-align:right;padding-right:5px">电子证照</div>
<div class="ab" style="left:1872px;top:367px;width:1px;height:0"></div>
<div class="cell" style="left:46px;top:400px;color:#262626;">武</div>
<div class="ab" style="left:105px;top:395px;width:140px;height:27px;overflow:hidden"><div class="cell" style="left:-3px;top:5px;color:#262626">30</div></div>
<div class="cell" style="left:255px;top:400px;color:#262626;letter-spacing:0.45px;">1990-05-21</div>
<div class="cell" style="left:340px;top:400px;width:36px;text-align:right;color:#262626">30</div>
<div class="cell" style="left:385px;top:400px;color:#262626;">在册</div>
<div class="cell" style="left:589px;top:400px;color:#262626;">延续注册</div>
<div class="cell" style="left:664px;top:400px;color:#262626;">20</div>
<div class="cell" style="left:784px;top:400px;color:#262626;letter-spacing:0.45px;">2021-12-14</div>
<div class="cell" style="left:924px;top:400px;color:#262626;">护士</div>
<div class="cell" style="left:1003px;top:400px;color:#262626;">大学专科</div>
<div class="cell" style="left:1088px;top:400px;color:#262626;">监护室</div>
<div class="cell" style="left:1332px;top:400px;color:#262626;">已激活</div>
<div class="cell" style="left:1435px;top:400px;color:#262626;">已申领</div>
<div class="btn" style="left:1528px;top:397px;width:85px">详细信息</div>
<div class="btn" style="left:1619px;top:397px;width:77px">历史沿革</div>
<div class="btn" style="left:1702px;top:397px;width:87px">信息修改</div>
<div class="btn" style="left:1795px;top:397px;width:77px;text-align:right;padding-right:5px">电子证照</div>
<div class="ab" style="left:1872px;top:395px;width:1px;height:0"></div>
<div class="cell" style="left:46px;top:428px;color:#262626;">高</div>
<div class="ab" style="left:105px;top:423px;width:140px;height:27px;overflow:hidden"><div class="cell" style="left:-3px;top:5px;color:#262626">30</div></div>
<div class="cell" style="left:255px;top:428px;color:#262626;letter-spacing:0.45px;">1989-03-31</div>
<div class="cell" style="left:340px;top:428px;width:36px;text-align:right;color:#262626">31</div>
<div class="cell" style="left:385px;top:428px;color:#262626;">在册</div>
<div class="cell" style="left:589px;top:428px;color:#262626;">延续注册</div>
<div class="cell" style="left:664px;top:428px;color:#262626;">2</div>
<div class="cell" style="left:784px;top:428px;color:#262626;letter-spacing:0.45px;">2021-12-14</div>
<div class="cell" style="left:924px;top:428px;color:#262626;">护士</div>
<div class="cell" style="left:1003px;top:428px;color:#262626;">大学本科</div>
<div class="cell" style="left:1088px;top:428px;color:#262626;">病房</div>
<div class="cell" style="left:1332px;top:428px;color:#262626;">已激活</div>
<div class="cell" style="left:1435px;top:428px;color:#262626;">已申领</div>
<div class="btn" style="left:1528px;top:425px;width:85px">详细信息</div>
<div class="btn" style="left:1619px;top:425px;width:77px">历史沿革</div>
<div class="btn" style="left:1702px;top:425px;width:87px">信息修改</div>
<div class="btn" style="left:1795px;top:425px;width:77px;text-align:right;padding-right:5px">电子证照</div>
<div class="ab" style="left:1872px;top:423px;width:1px;height:0"></div>
<div class="cell" style="left:46px;top:456px;color:#262626;">杨</div>
<div class="ab" style="left:105px;top:451px;width:140px;height:27px;overflow:hidden"><div class="cell" style="left:-3px;top:5px;color:#262626">30</div></div>
<div class="cell" style="left:255px;top:456px;color:#262626;letter-spacing:0.45px;">1989-10-26</div>
<div class="cell" style="left:340px;top:456px;width:36px;text-align:right;color:#262626">31</div>
<div class="cell" style="left:385px;top:456px;color:#262626;">在册</div>
<div class="cell" style="left:589px;top:456px;color:#262626;">延续注册</div>
<div class="cell" style="left:664px;top:456px;color:#262626;">20</div>
<div class="cell" style="left:784px;top:456px;color:#262626;letter-spacing:0.45px;">2021-12-14</div>
<div class="cell" style="left:924px;top:456px;color:#262626;">护士</div>
<div class="cell" style="left:1003px;top:456px;color:#262626;">大学本科</div>
<div class="cell" style="left:1088px;top:456px;color:#262626;">供应室</div>
<div class="cell" style="left:1332px;top:456px;color:#262626;">已激活</div>
<div class="cell" style="left:1435px;top:456px;color:#262626;">已申领</div>
<div class="btn" style="left:1528px;top:453px;width:85px">详细信息</div>
<div class="btn" style="left:1619px;top:453px;width:77px">历史沿革</div>
<div class="btn" style="left:1702px;top:453px;width:87px">信息修改</div>
<div class="btn" style="left:1795px;top:453px;width:77px;text-align:right;padding-right:5px">电子证照</div>
<div class="ab" style="left:1872px;top:451px;width:1px;height:0"></div>
<div class="cell" style="left:46px;top:484px;color:#262626;">杜</div>
<div class="ab" style="left:105px;top:479px;width:140px;height:27px;overflow:hidden"><div class="cell" style="left:-3px;top:5px;color:#262626">307</div></div>
<div class="cell" style="left:255px;top:484px;color:#262626;letter-spacing:0.45px;">1991-05-25</div>
<div class="cell" style="left:340px;top:484px;width:36px;text-align:right;color:#262626">29</div>
<div class="cell" style="left:385px;top:484px;color:#262626;">在册</div>
<div class="cell" style="left:589px;top:484px;color:#262626;">延续注册</div>
<div class="cell" style="left:664px;top:484px;color:#262626;">20</div>
<div class="cell" style="left:784px;top:484px;color:#262626;letter-spacing:0.45px;">2021-12-14</div>
<div class="cell" style="left:924px;top:484px;color:#262626;">护士</div>
<div class="cell" style="left:1003px;top:484px;color:#262626;">大学本科</div>
<div class="cell" style="left:1088px;top:484px;color:#262626;">急诊（科）室</div>
<div class="cell" style="left:1332px;top:484px;color:#262626;">已激活</div>
<div class="cell" style="left:1435px;top:484px;color:#262626;">已申领</div>
<div class="btn" style="left:1528px;top:481px;width:85px">详细信息</div>
<div class="btn" style="left:1619px;top:481px;width:77px">历史沿革</div>
<div class="btn" style="left:1702px;top:481px;width:87px">信息修改</div>
<div class="btn" style="left:1795px;top:481px;width:77px;text-align:right;padding-right:5px">电子证照</div>
<div class="ab" style="left:1872px;top:479px;width:1px;height:0"></div>
<div class="cell" style="left:46px;top:512px;color:#262626;">朱</div>
<div class="ab" style="left:105px;top:507px;width:140px;height:27px;overflow:hidden"><div class="cell" style="left:-3px;top:5px;color:#262626">30</div></div>
<div class="cell" style="left:255px;top:512px;color:#262626;letter-spacing:0.45px;">1989-02-15</div>
<div class="cell" style="left:340px;top:512px;width:36px;text-align:right;color:#262626">31</div>
<div class="cell" style="left:385px;top:512px;color:#262626;">在册</div>
<div class="cell" style="left:589px;top:512px;color:#262626;">延续注册</div>
<div class="cell" style="left:664px;top:512px;color:#262626;">20</div>
<div class="cell" style="left:784px;top:512px;color:#262626;letter-spacing:0.45px;">2021-12-14</div>
<div class="cell" style="left:924px;top:512px;color:#262626;">护士</div>
<div class="cell" style="left:1003px;top:512px;color:#262626;">大学本科</div>
<div class="cell" style="left:1088px;top:512px;color:#262626;">急诊（科）室</div>
<div class="cell" style="left:1332px;top:512px;color:#262626;">已激活</div>
<div class="cell" style="left:1435px;top:512px;color:#262626;">已申领</div>
<div class="btn" style="left:1528px;top:509px;width:85px">详细信息</div>
<div class="btn" style="left:1619px;top:509px;width:77px">历史沿革</div>
<div class="btn" style="left:1702px;top:509px;width:87px">信息修改</div>
<div class="btn" style="left:1795px;top:509px;width:77px;text-align:right;padding-right:5px">电子证照</div>
<div class="ab" style="left:1872px;top:507px;width:1px;height:0"></div>
<div class="cell" style="left:46px;top:540px;color:#262626;">李</div>
<div class="ab" style="left:105px;top:535px;width:140px;height:27px;overflow:hidden"><div class="cell" style="left:-3px;top:5px;color:#262626">30</div></div>
<div class="cell" style="left:255px;top:540px;color:#262626;letter-spacing:0.45px;">1989-11-22</div>
<div class="cell" style="left:340px;top:540px;width:36px;text-align:right;color:#262626">31</div>
<div class="cell" style="left:385px;top:540px;color:#262626;">在册</div>
<div class="cell" style="left:589px;top:540px;color:#262626;">延续注册</div>
<div class="cell" style="left:664px;top:540px;color:#262626;">20</div>
<div class="cell" style="left:784px;top:540px;color:#262626;letter-spacing:0.45px;">2021-12-14</div>
<div class="cell" style="left:924px;top:540px;color:#262626;">护士</div>
<div class="cell" style="left:1003px;top:540px;color:#262626;">大学本科</div>
<div class="cell" style="left:1088px;top:540px;color:#262626;">病房</div>
<div class="cell" style="left:1332px;top:540px;color:#262626;">已激活</div>
<div class="cell" style="left:1435px;top:540px;color:#262626;">已申领</div>
<div class="btn" style="left:1528px;top:537px;width:85px">详细信息</div>
<div class="btn" style="left:1619px;top:537px;width:77px">历史沿革</div>
<div class="btn" style="left:1702px;top:537px;width:87px">信息修改</div>
<div class="btn" style="left:1795px;top:537px;width:77px;text-align:right;padding-right:5px">电子证照</div>
<div class="ab" style="left:1872px;top:535px;width:1px;height:0"></div>
<div class="ab" style="left:53px;top:314px;width:28px;height:21px;border-radius:10px;overflow:hidden;filter:blur(0.6px);"><div class="ab" style="left:0px;top:0.0px;width:10px;height:11.0px;background:#e0e0fa"></div><div class="ab" style="left:10px;top:0.0px;width:10px;height:11.0px;background:#d4d4f8"></div><div class="ab" style="left:20px;top:0.0px;width:10px;height:11.0px;background:#e4e4fa"></div><div class="ab" style="left:0px;top:10.5px;width:10px;height:11.0px;background:#8c8cf2"></div><div class="ab" style="left:10px;top:10.5px;width:10px;height:11.0px;background:#c8c8f8"></div><div class="ab" style="left:20px;top:10.5px;width:10px;height:11.0px;background:#dcdcfa"></div></div>
<div class="ab" style="left:50px;top:344px;width:40px;height:16px;border-radius:8px;overflow:hidden;filter:blur(0.6px);"><div class="ab" style="left:0px;top:0.0px;width:10px;height:8.5px;background:#dcdcfa"></div><div class="ab" style="left:10px;top:0.0px;width:10px;height:8.5px;background:#d0d0f8"></div><div class="ab" style="left:20px;top:0.0px;width:10px;height:8.5px;background:#d8d8fa"></div><div class="ab" style="left:30px;top:0.0px;width:10px;height:8.5px;background:#d4d4f8"></div><div class="ab" style="left:0px;top:8.0px;width:10px;height:8.5px;background:#c0c0f8"></div><div class="ab" style="left:10px;top:8.0px;width:10px;height:8.5px;background:#a0a0f6"></div><div class="ab" style="left:20px;top:8.0px;width:10px;height:8.5px;background:#a0a0f6"></div><div class="ab" style="left:30px;top:8.0px;width:10px;height:8.5px;background:#a8a8f6"></div></div>
<div class="ab" style="left:55px;top:371px;width:35px;height:19px;border-radius:9px;overflow:hidden;filter:blur(0.6px);"><div class="ab" style="left:0px;top:0.0px;width:10px;height:10.0px;background:#d0d2d1"></div><div class="ab" style="left:10px;top:0.0px;width:10px;height:10.0px;background:#d4d4d6"></div><div class="ab" style="left:20px;top:0.0px;width:10px;height:10.0px;background:#d2d2d2"></div><div class="ab" style="left:30px;top:0.0px;width:10px;height:10.0px;background:#d1d0cf"></div><div class="ab" style="left:0px;top:9.5px;width:10px;height:10.0px;background:#c4c4c6"></div><div class="ab" style="left:10px;top:9.5px;width:10px;height:10.0px;background:#d6d4d8"></div><div class="ab" style="left:20px;top:9.5px;width:10px;height:10.0px;background:#ccccce"></div><div class="ab" style="left:30px;top:9.5px;width:10px;height:10.0px;background:#d1d2d5"></div></div>
<div class="ab" style="left:51px;top:401px;width:29px;height:19px;border-radius:9px;overflow:hidden;filter:blur(0.6px);"><div class="ab" style="left:0px;top:0.0px;width:10px;height:10.0px;background:#d4d4d4"></div><div class="ab" style="left:10px;top:0.0px;width:10px;height:10.0px;background:#d2d2d0"></div><div class="ab" style="left:20px;top:0.0px;width:10px;height:10.0px;background:#e6e6e8"></div><div class="ab" style="left:0px;top:9.5px;width:10px;height:10.0px;background:#d0d0d2"></div><div class="ab" style="left:10px;top:9.5px;width:10px;height:10.0px;background:#d2d2d0"></div><div class="ab" style="left:20px;top:9.5px;width:10px;height:10.0px;background:#ececee"></div></div>
<div class="ab" style="left:50px;top:430px;width:30px;height:19px;border-radius:8px;overflow:hidden;filter:blur(0.6px);"><div class="ab" style="left:0px;top:0.0px;width:10px;height:10.0px;background:#a8a8aa"></div><div class="ab" style="left:10px;top:0.0px;width:10px;height:10.0px;background:#b4b2b0"></div><div class="ab" style="left:20px;top:0.0px;width:10px;height:10.0px;background:#dedee4"></div><div class="ab" style="left:0px;top:9.5px;width:10px;height:10.0px;background:#ececec"></div><div class="ab" style="left:10px;top:9.5px;width:10px;height:10.0px;background:#f0f0f0"></div><div class="ab" style="left:20px;top:9.5px;width:10px;height:10.0px;background:#f4f4f6"></div></div>
<div class="ab" style="left:53px;top:456px;width:31px;height:20px;border-radius:9px;overflow:hidden;filter:blur(0.6px);"><div class="ab" style="left:0px;top:0.0px;width:10px;height:10.5px;background:#b4b4b4"></div><div class="ab" style="left:10px;top:0.0px;width:10px;height:10.5px;background:#bcb8b6"></div><div class="ab" style="left:20px;top:0.0px;width:10px;height:10.5px;background:#e4e6ea"></div><div class="ab" style="left:30px;top:0.0px;width:10px;height:10.5px;background:#b4b4b4"></div><div class="ab" style="left:0px;top:10.0px;width:10px;height:10.5px;background:#eeeeee"></div><div class="ab" style="left:10px;top:10.0px;width:10px;height:10.5px;background:#f0f0f0"></div><div class="ab" style="left:20px;top:10.0px;width:10px;height:10.5px;background:#f4f4f4"></div><div class="ab" style="left:30px;top:10.0px;width:10px;height:10.5px;background:#eeeeee"></div></div>
<div class="ab" style="left:53px;top:485px;width:37px;height:20px;border-radius:9px;overflow:hidden;filter:blur(0.6px);"><div class="ab" style="left:0px;top:0.0px;width:10px;height:10.5px;background:#e4e4e4"></div><div class="ab" style="left:10px;top:0.0px;width:10px;height:10.5px;background:#e8e8e8"></div><div class="ab" style="left:20px;top:0.0px;width:10px;height:10.5px;background:#eeeeee"></div><div class="ab" style="left:30px;top:0.0px;width:10px;height:10.5px;background:#eeeeee"></div><div class="ab" style="left:0px;top:10.0px;width:10px;height:10.5px;background:#cccccc"></div><div class="ab" style="left:10px;top:10.0px;width:10px;height:10.5px;background:#a8a6a4"></div><div class="ab" style="left:20px;top:10.0px;width:10px;height:10.5px;background:#a4a4a4"></div><div class="ab" style="left:30px;top:10.0px;width:10px;height:10.5px;background:#a8aab0"></div></div>
<div class="ab" style="left:54px;top:512px;width:35px;height:19px;border-radius:9px;overflow:hidden;filter:blur(0.6px);"><div class="ab" style="left:0px;top:0.0px;width:10px;height:10.0px;background:#d8d8d8"></div><div class="ab" style="left:10px;top:0.0px;width:10px;height:10.0px;background:#d0cece"></div><div class="ab" style="left:20px;top:0.0px;width:10px;height:10.0px;background:#dcdcdc"></div><div class="ab" style="left:30px;top:0.0px;width:10px;height:10.0px;background:#e0e2e6"></div><div class="ab" style="left:0px;top:9.5px;width:10px;height:10.0px;background:#d0d0d0"></div><div class="ab" style="left:10px;top:9.5px;width:10px;height:10.0px;background:#c8c4c2"></div><div class="ab" style="left:20px;top:9.5px;width:10px;height:10.0px;background:#c4c2c0"></div><div class="ab" style="left:30px;top:9.5px;width:10px;height:10.0px;background:#ccd0d6"></div></div>
<div class="ab" style="left:54px;top:540px;width:35px;height:20px;border-radius:9px;overflow:hidden;filter:blur(0.6px);"><div class="ab" style="left:0px;top:0.0px;width:10px;height:10.5px;background:#c8c8c8"></div><div class="ab" style="left:10px;top:0.0px;width:10px;height:10.5px;background:#b8b4b2"></div><div class="ab" style="left:20px;top:0.0px;width:10px;height:10.5px;background:#c8c8c8"></div><div class="ab" style="left:30px;top:0.0px;width:10px;height:10.5px;background:#d4d4d6"></div><div class="ab" style="left:0px;top:10.0px;width:10px;height:10.5px;background:#e8e8e8"></div><div class="ab" style="left:10px;top:10.0px;width:10px;height:10.5px;background:#eeeeee"></div><div class="ab" style="left:20px;top:10.0px;width:10px;height:10.5px;background:#dcdcdc"></div><div class="ab" style="left:30px;top:10.0px;width:10px;height:10.5px;background:#e4e4e4"></div></div>
<div class="ab" style="left:120px;top:316px;width:120px;height:14px;border-radius:7px;overflow:hidden;filter:blur(0.6px);box-shadow:0 -3px 0 #d4dbe2"><div class="ab" style="left:0px;top:0.0px;width:10px;height:7.5px;background:#a9afb9"></div><div class="ab" style="left:10px;top:0.0px;width:10px;height:7.5px;background:#afb5bc"></div><div class="ab" style="left:20px;top:0.0px;width:10px;height:7.5px;background:#a8adb5"></div><div class="ab" style="left:30px;top:0.0px;width:10px;height:7.5px;background:#adb4bc"></div><div class="ab" style="left:40px;top:0.0px;width:10px;height:7.5px;background:#b5bac4"></div><div class="ab" style="left:50px;top:0.0px;width:10px;height:7.5px;background:#b1b5be"></div><div class="ab" style="left:60px;top:0.0px;width:10px;height:7.5px;background:#a5aab3"></div><div class="ab" style="left:70px;top:0.0px;width:10px;height:7.5px;background:#b5bcc2"></div><div class="ab" style="left:80px;top:0.0px;width:10px;height:7.5px;background:#a3abb1"></div><div class="ab" style="left:90px;top:0.0px;width:10px;height:7.5px;background:#aab0b8"></div><div class="ab" style="left:100px;top:0.0px;width:10px;height:7.5px;background:#aeb4bd"></div><div class="ab" style="left:110px;top:0.0px;width:10px;height:7.5px;background:#acb3bb"></div><div class="ab" style="left:0px;top:7.0px;width:10px;height:7.5px;background:#a1a6af"></div><div class="ab" style="left:10px;top:7.0px;width:10px;height:7.5px;background:#adb5bd"></div><div class="ab" style="left:20px;top:7.0px;width:10px;height:7.5px;background:#a0a6ac"></div><div class="ab" style="left:30px;top:7.0px;width:10px;height:7.5px;background:#9fa5ad"></div><div class="ab" style="left:40px;top:7.0px;width:10px;height:7.5px;background:#afb5bb"></div><div class="ab" style="left:50px;top:7.0px;width:10px;height:7.5px;background:#a3a9b1"></div><div class="ab" style="left:60px;top:7.0px;width:10px;height:7.5px;background:#a4aab1"></div><div class="ab" style="left:70px;top:7.0px;width:10px;height:7.5px;background:#a1a7ae"></div><div class="ab" style="left:80px;top:7.0px;width:10px;height:7.5px;background:#a1a6ae"></div><div class="ab" style="left:90px;top:7.0px;width:10px;height:7.5px;background:#aeb3bc"></div><div class="ab" style="left:100px;top:7.0px;width:10px;height:7.5px;background:#9da5ad"></div><div class="ab" style="left:110px;top:7.0px;width:10px;height:7.5px;background:#abb2ba"></div></div>
<div class="ab" style="left:114px;top:343px;width:126px;height:17px;border-radius:9px;overflow:hidden;filter:blur(0.6px);"><div class="ab" style="left:0px;top:0.0px;width:10px;height:9.0px;background:#e8e7e7"></div><div class="ab" style="left:10px;top:0.0px;width:10px;height:9.0px;background:#e0e2e1"></div><div class="ab" style="left:20px;top:0.0px;width:10px;height:9.0px;background:#dbdbdb"></div><div class="ab" style="left:30px;top:0.0px;width:10px;height:9.0px;background:#e0dfe0"></div><div class="ab" style="left:40px;top:0.0px;width:10px;height:9.0px;background:#dcdcdd"></div><div class="ab" style="left:50px;top:0.0px;width:10px;height:9.0px;background:#e9e8e9"></div><div class="ab" style="left:60px;top:0.0px;width:10px;height:9.0px;background:#dbdbd9"></div><div class="ab" style="left:70px;top:0.0px;width:10px;height:9.0px;background:#e3e2e1"></div><div class="ab" style="left:80px;top:0.0px;width:10px;height:9.0px;background:#e3e2e3"></div><div class="ab" style="left:90px;top:0.0px;width:10px;height:9.0px;background:#dbdbda"></div><div class="ab" style="left:100px;top:0.0px;width:10px;height:9.0px;background:#e9ebe9"></div><div class="ab" style="left:110px;top:0.0px;width:10px;height:9.0px;background:#e4e4e4"></div><div class="ab" style="left:120px;top:0.0px;width:10px;height:9.0px;background:#dfe0df"></div><div class="ab" style="left:0px;top:8.5px;width:10px;height:9.0px;background:#dfe1e0"></div><div class="ab" style="left:10px;top:8.5px;width:10px;height:9.0px;background:#dededf"></div><div class="ab" style="left:20px;top:8.5px;width:10px;height:9.0px;background:#d8d8d8"></div><div class="ab" style="left:30px;top:8.5px;width:10px;height:9.0px;background:#d1d3d2"></div><div class="ab" style="left:40px;top:8.5px;width:10px;height:9.0px;background:#d3d1d1"></div><div class="ab" style="left:50px;top:8.5px;width:10px;height:9.0px;background:#e0dedf"></div><div class="ab" style="left:60px;top:8.5px;width:10px;height:9.0px;background:#e1e0df"></div><div class="ab" style="left:70px;top:8.5px;width:10px;height:9.0px;background:#d7d6d6"></div><div class="ab" style="left:80px;top:8.5px;width:10px;height:9.0px;background:#dbdcdb"></div><div class="ab" style="left:90px;top:8.5px;width:10px;height:9.0px;background:#d2d2d2"></div><div class="ab" style="left:100px;top:8.5px;width:10px;height:9.0px;background:#d9dbdb"></div><div class="ab" style="left:110px;top:8.5px;width:10px;height:9.0px;background:#d8d6d6"></div><div class="ab" style="left:120px;top:8.5px;width:10px;height:9.0px;background:#d3d3d1"></div></div>
<div class="ab" style="left:115px;top:370px;width:125px;height:21px;border-radius:10px;overflow:hidden;filter:blur(0.6px);"><div class="ab" style="left:0px;top:0.0px;width:10px;height:11.0px;background:#dfdfe0"></div><div class="ab" style="left:10px;top:0.0px;width:10px;height:11.0px;background:#dcdadb"></div><div class="ab" style="left:20px;top:0.0px;width:10px;height:11.0px;background:#e7e9e7"></div><div class="ab" style="left:30px;top:0.0px;width:10px;height:11.0px;background:#ecebea"></div><div class="ab" style="left:40px;top:0.0px;width:10px;height:11.0px;background:#e8e7e7"></div><div class="ab" style="left:50px;top:0.0px;width:10px;height:11.0px;background:#dddcdc"></div><div class="ab" style="left:60px;top:0.0px;width:10px;height:11.0px;background:#e6e6e7"></div><div class="ab" style="left:70px;top:0.0px;width:10px;height:11.0px;background:#dbdbdb"></div><div class="ab" style="left:80px;top:0.0px;width:10px;height:11.0px;background:#dbdcdd"></div><div class="ab" style="left:90px;top:0.0px;width:10px;height:11.0px;background:#e2e2e2"></div><div class="ab" style="left:100px;top:0.0px;width:10px;height:11.0px;background:#e0dfde"></div><div class="ab" style="left:110px;top:0.0px;width:10px;height:11.0px;background:#e5e6e6"></div><div class="ab" style="left:120px;top:0.0px;width:10px;height:11.0px;background:#dfe0e1"></div><div class="ab" style="left:0px;top:10.5px;width:10px;height:11.0px;background:#dddfdf"></div><div class="ab" style="left:10px;top:10.5px;width:10px;height:11.0px;background:#dadada"></div><div class="ab" style="left:20px;top:10.5px;width:10px;height:11.0px;background:#e8e8e7"></div><div class="ab" style="left:30px;top:10.5px;width:10px;height:11.0px;background:#e6e6e7"></div><div class="ab" style="left:40px;top:10.5px;width:10px;height:11.0px;background:#dbdbdb"></div><div class="ab" style="left:50px;top:10.5px;width:10px;height:11.0px;background:#e4e5e5"></div><div class="ab" style="left:60px;top:10.5px;width:10px;height:11.0px;background:#ededec"></div><div class="ab" style="left:70px;top:10.5px;width:10px;height:11.0px;background:#dedfde"></div><div class="ab" style="left:80px;top:10.5px;width:10px;height:11.0px;background:#dddddd"></div><div class="ab" style="left:90px;top:10.5px;width:10px;height:11.0px;background:#dddcdb"></div><div class="ab" style="left:100px;top:10.5px;width:10px;height:11.0px;background:#dddcdd"></div><div class="ab" style="left:110px;top:10.5px;width:10px;height:11.0px;background:#eaeaec"></div><div class="ab" style="left:120px;top:10.5px;width:10px;height:11.0px;background:#dcdcde"></div></div>
<div class="ab" style="left:116px;top:400px;width:124px;height:19px;border-radius:9px;overflow:hidden;filter:blur(0.6px);"><div class="ab" style="left:0px;top:0.0px;width:10px;height:10.0px;background:#cfcdce"></div><div class="ab" style="left:10px;top:0.0px;width:10px;height:10.0px;background:#d0ced0"></div><div class="ab" style="left:20px;top:0.0px;width:10px;height:10.0px;background:#cecccd"></div><div class="ab" style="left:30px;top:0.0px;width:10px;height:10.0px;background:#dcdcdb"></div><div class="ab" style="left:40px;top:0.0px;width:10px;height:10.0px;background:#d5d6d6"></div><div class="ab" style="left:50px;top:0.0px;width:10px;height:10.0px;background:#d1d1d0"></div><div class="ab" style="left:60px;top:0.0px;width:10px;height:10.0px;background:#dad9d9"></div><div class="ab" style="left:70px;top:0.0px;width:10px;height:10.0px;background:#dbdbd9"></div><div class="ab" style="left:80px;top:0.0px;width:10px;height:10.0px;background:#cfcdcf"></div><div class="ab" style="left:90px;top:0.0px;width:10px;height:10.0px;background:#d3d4d3"></div><div class="ab" style="left:100px;top:0.0px;width:10px;height:10.0px;background:#d3d3d2"></div><div class="ab" style="left:110px;top:0.0px;width:10px;height:10.0px;background:#dbdbda"></div><div class="ab" style="left:120px;top:0.0px;width:10px;height:10.0px;background:#dbdddd"></div><div class="ab" style="left:0px;top:9.5px;width:10px;height:10.0px;background:#eeecec"></div><div class="ab" style="left:10px;top:9.5px;width:10px;height:10.0px;background:#ebebed"></div><div class="ab" style="left:20px;top:9.5px;width:10px;height:10.0px;background:#e8e8e9"></div><div class="ab" style="left:30px;top:9.5px;width:10px;height:10.0px;background:#ebeae9"></div><div class="ab" style="left:40px;top:9.5px;width:10px;height:10.0px;background:#edecec"></div><div class="ab" style="left:50px;top:9.5px;width:10px;height:10.0px;background:#e4e6e5"></div><div class="ab" style="left:60px;top:9.5px;width:10px;height:10.0px;background:#ebebec"></div><div class="ab" style="left:70px;top:9.5px;width:10px;height:10.0px;background:#e9e8e7"></div><div class="ab" style="left:80px;top:9.5px;width:10px;height:10.0px;background:#f3f3f2"></div><div class="ab" style="left:90px;top:9.5px;width:10px;height:10.0px;background:#e3e3e5"></div><div class="ab" style="left:100px;top:9.5px;width:10px;height:10.0px;background:#e9e7e8"></div><div class="ab" style="left:110px;top:9.5px;width:10px;height:10.0px;background:#e8e7e7"></div><div class="ab" style="left:120px;top:9.5px;width:10px;height:10.0px;background:#edeced"></div></div>
<div class="ab" style="left:114px;top:427px;width:126px;height:22px;border-radius:9px;overflow:hidden;filter:blur(0.6px);"><div class="ab" style="left:0px;top:0.0px;width:10px;height:11.5px;background:#cccacc"></div><div class="ab" style="left:10px;top:0.0px;width:10px;height:11.5px;background:#c8c9c8"></div><div class="ab" style="left:20px;top:0.0px;width:10px;height:11.5px;background:#c8c8c8"></div><div class="ab" style="left:30px;top:0.0px;width:10px;height:11.5px;background:#d1d1d3"></div><div class="ab" style="left:40px;top:0.0px;width:10px;height:11.5px;background:#cfd0d0"></div><div class="ab" style="left:50px;top:0.0px;width:10px;height:11.5px;background:#cccbcd"></div><div class="ab" style="left:60px;top:0.0px;width:10px;height:11.5px;background:#c8c7c8"></div><div class="ab" style="left:70px;top:0.0px;width:10px;height:11.5px;background:#cbcccc"></div><div class="ab" style="left:80px;top:0.0px;width:10px;height:11.5px;background:#cdcdcd"></div><div class="ab" style="left:90px;top:0.0px;width:10px;height:11.5px;background:#cbcbcb"></div><div class="ab" style="left:100px;top:0.0px;width:10px;height:11.5px;background:#c7c7c8"></div><div class="ab" style="left:110px;top:0.0px;width:10px;height:11.5px;background:#d5d6d6"></div><div class="ab" style="left:120px;top:0.0px;width:10px;height:11.5px;background:#cececf"></div><div class="ab" style="left:0px;top:11.0px;width:10px;height:11.5px;background:#e9e8e7"></div><div class="ab" style="left:10px;top:11.0px;width:10px;height:11.5px;background:#e7e6e6"></div><div class="ab" style="left:20px;top:11.0px;width:10px;height:11.5px;background:#edeeee"></div><div class="ab" style="left:30px;top:11.0px;width:10px;height:11.5px;background:#e6e7e5"></div><div class="ab" style="left:40px;top:11.0px;width:10px;height:11.5px;background:#eaeceb"></div><div class="ab" style="left:50px;top:11.0px;width:10px;height:11.5px;background:#e4e4e4"></div><div class="ab" style="left:60px;top:11.0px;width:10px;height:11.5px;background:#e9e9e8"></div><div class="ab" style="left:70px;top:11.0px;width:10px;height:11.5px;background:#eeedee"></div><div class="ab" style="left:80px;top:11.0px;width:10px;height:11.5px;background:#e7e6e7"></div><div class="ab" style="left:90px;top:11.0px;width:10px;height:11.5px;background:#edecec"></div><div class="ab" style="left:100px;top:11.0px;width:10px;height:11.5px;background:#f0eff0"></div><div class="ab" style="left:110px;top:11.0px;width:10px;height:11.5px;background:#e6e7e8"></div><div class="ab" style="left:120px;top:11.0px;width:10px;height:11.5px;background:#f0f0ee"></div></div>
<div class="ab" style="left:118px;top:454px;width:122px;height:20px;border-radius:9px;overflow:hidden;filter:blur(0.6px);"><div class="ab" style="left:0px;top:0.0px;width:10px;height:10.5px;background:#d9d9da"></div><div class="ab" style="left:10px;top:0.0px;width:10px;height:10.5px;background:#c7c7c6"></div><div class="ab" style="left:20px;top:0.0px;width:10px;height:10.5px;background:#d5d5d5"></div><div class="ab" style="left:30px;top:0.0px;width:10px;height:10.5px;background:#d1d1d1"></div><div class="ab" style="left:40px;top:0.0px;width:10px;height:10.5px;background:#cecdce"></div><div class="ab" style="left:50px;top:0.0px;width:10px;height:10.5px;background:#cdcbcc"></div><div class="ab" style="left:60px;top:0.0px;width:10px;height:10.5px;background:#d8d8d8"></div><div class="ab" style="left:70px;top:0.0px;width:10px;height:10.5px;background:#d0d0d2"></div><div class="ab" style="left:80px;top:0.0px;width:10px;height:10.5px;background:#cfcfcf"></div><div class="ab" style="left:90px;top:0.0px;width:10px;height:10.5px;background:#c6c6c7"></div><div class="ab" style="left:100px;top:0.0px;width:10px;height:10.5px;background:#c9c9ca"></div><div class="ab" style="left:110px;top:0.0px;width:10px;height:10.5px;background:#d8dada"></div><div class="ab" style="left:120px;top:0.0px;width:10px;height:10.5px;background:#d3d3d2"></div><div class="ab" style="left:0px;top:10.0px;width:10px;height:10.5px;background:#eaeae8"></div><div class="ab" style="left:10px;top:10.0px;width:10px;height:10.5px;background:#e8e7e7"></div><div class="ab" style="left:20px;top:10.0px;width:10px;height:10.5px;background:#f5f4f6"></div><div class="ab" style="left:30px;top:10.0px;width:10px;height:10.5px;background:#ebeceb"></div><div class="ab" style="left:40px;top:10.0px;width:10px;height:10.5px;background:#f4f4f4"></div><div class="ab" style="left:50px;top:10.0px;width:10px;height:10.5px;background:#eff0f0"></div><div class="ab" style="left:60px;top:10.0px;width:10px;height:10.5px;background:#f5f6f5"></div><div class="ab" style="left:70px;top:10.0px;width:10px;height:10.5px;background:#ebeaea"></div><div class="ab" style="left:80px;top:10.0px;width:10px;height:10.5px;background:#eceeed"></div><div class="ab" style="left:90px;top:10.0px;width:10px;height:10.5px;background:#f5f6f4"></div><div class="ab" style="left:100px;top:10.0px;width:10px;height:10.5px;background:#edecee"></div><div class="ab" style="left:110px;top:10.0px;width:10px;height:10.5px;background:#edeeee"></div><div class="ab" style="left:120px;top:10.0px;width:10px;height:10.5px;background:#f0eeee"></div></div>
<div class="ab" style="left:118px;top:482px;width:122px;height:19px;border-radius:9px;overflow:hidden;filter:blur(0.6px);"><div class="ab" style="left:0px;top:0.0px;width:10px;height:10.0px;background:#dedfe0"></div><div class="ab" style="left:10px;top:0.0px;width:10px;height:10.0px;background:#e0dede"></div><div class="ab" style="left:20px;top:0.0px;width:10px;height:10.0px;background:#e8e8e9"></div><div class="ab" style="left:30px;top:0.0px;width:10px;height:10.0px;background:#e9e8e8"></div><div class="ab" style="left:40px;top:0.0px;width:10px;height:10.0px;background:#e8e9e9"></div><div class="ab" style="left:50px;top:0.0px;width:10px;height:10.0px;background:#dcdbdb"></div><div class="ab" style="left:60px;top:0.0px;width:10px;height:10.0px;background:#dbdbdb"></div><div class="ab" style="left:70px;top:0.0px;width:10px;height:10.0px;background:#e9e9e9"></div><div class="ab" style="left:80px;top:0.0px;width:10px;height:10.0px;background:#edebec"></div><div class="ab" style="left:90px;top:0.0px;width:10px;height:10.0px;background:#e2e2e2"></div><div class="ab" style="left:100px;top:0.0px;width:10px;height:10.0px;background:#dbdbdc"></div><div class="ab" style="left:110px;top:0.0px;width:10px;height:10.0px;background:#e8e6e7"></div><div class="ab" style="left:120px;top:0.0px;width:10px;height:10.0px;background:#e0e0de"></div><div class="ab" style="left:0px;top:9.5px;width:10px;height:10.0px;background:#dadada"></div><div class="ab" style="left:10px;top:9.5px;width:10px;height:10.0px;background:#cccecd"></div><div class="ab" style="left:20px;top:9.5px;width:10px;height:10.0px;background:#d1d0d0"></div><div class="ab" style="left:30px;top:9.5px;width:10px;height:10.0px;background:#d5d5d4"></div><div class="ab" style="left:40px;top:9.5px;width:10px;height:10.0px;background:#dbdbdb"></div><div class="ab" style="left:50px;top:9.5px;width:10px;height:10.0px;background:#d5d5d4"></div><div class="ab" style="left:60px;top:9.5px;width:10px;height:10.0px;background:#dbdddd"></div><div class="ab" style="left:70px;top:9.5px;width:10px;height:10.0px;background:#cecdcf"></div><div class="ab" style="left:80px;top:9.5px;width:10px;height:10.0px;background:#d0cece"></div><div class="ab" style="left:90px;top:9.5px;width:10px;height:10.0px;background:#d3d3d5"></div><div class="ab" style="left:100px;top:9.5px;width:10px;height:10.0px;background:#d0d0d1"></div><div class="ab" style="left:110px;top:9.5px;width:10px;height:10.0px;background:#d1cfd0"></div><div class="ab" style="left:120px;top:9.5px;width:10px;height:10.0px;background:#d5d4d6"></div></div>
<div class="ab" style="left:118px;top:510px;width:122px;height:19px;border-radius:9px;overflow:hidden;filter:blur(0.6px);"><div class="ab" style="left:0px;top:0.0px;width:10px;height:10.0px;background:#d9dad9"></div><div class="ab" style="left:10px;top:0.0px;width:10px;height:10.0px;background:#e8e9ea"></div><div class="ab" style="left:20px;top:0.0px;width:10px;height:10.0px;background:#e3e4e2"></div><div class="ab" style="left:30px;top:0.0px;width:10px;height:10.0px;background:#dadada"></div><div class="ab" style="left:40px;top:0.0px;width:10px;height:10.0px;background:#dddfde"></div><div class="ab" style="left:50px;top:0.0px;width:10px;height:10.0px;background:#dbd9da"></div><div class="ab" style="left:60px;top:0.0px;width:10px;height:10.0px;background:#e8e9e8"></div><div class="ab" style="left:70px;top:0.0px;width:10px;height:10.0px;background:#dadad9"></div><div class="ab" style="left:80px;top:0.0px;width:10px;height:10.0px;background:#d7d7d6"></div><div class="ab" style="left:90px;top:0.0px;width:10px;height:10.0px;background:#e4e5e4"></div><div class="ab" style="left:100px;top:0.0px;width:10px;height:10.0px;background:#dbdadc"></div><div class="ab" style="left:110px;top:0.0px;width:10px;height:10.0px;background:#e8e7e8"></div><div class="ab" style="left:120px;top:0.0px;width:10px;height:10.0px;background:#e8e8e8"></div><div class="ab" style="left:0px;top:9.5px;width:10px;height:10.0px;background:#efefee"></div><div class="ab" style="left:10px;top:9.5px;width:10px;height:10.0px;background:#dfdfde"></div><div class="ab" style="left:20px;top:9.5px;width:10px;height:10.0px;background:#ececec"></div><div class="ab" style="left:30px;top:9.5px;width:10px;height:10.0px;background:#e9e8e9"></div><div class="ab" style="left:40px;top:9.5px;width:10px;height:10.0px;background:#e6e7e6"></div><div class="ab" style="left:50px;top:9.5px;width:10px;height:10.0px;background:#e8e8e8"></div><div class="ab" style="left:60px;top:9.5px;width:10px;height:10.0px;background:#e6e4e6"></div><div class="ab" style="left:70px;top:9.5px;width:10px;height:10.0px;background:#e2e2e4"></div><div class="ab" style="left:80px;top:9.5px;width:10px;height:10.0px;background:#eaebe9"></div><div class="ab" style="left:90px;top:9.5px;width:10px;height:10.0px;background:#ededec"></div><div class="ab" style="left:100px;top:9.5px;width:10px;height:10.0px;background:#eaeaeb"></div><div class="ab" style="left:110px;top:9.5px;width:10px;height:10.0px;background:#e4e5e3"></div><div class="ab" style="left:120px;top:9.5px;width:10px;height:10.0px;background:#e7e7e6"></div></div>
<div class="ab" style="left:118px;top:540px;width:122px;height:20px;border-radius:9px;overflow:hidden;filter:blur(0.6px);"><div class="ab" style="left:0px;top:0.0px;width:10px;height:10.5px;background:#dddddc"></div><div class="ab" style="left:10px;top:0.0px;width:10px;height:10.5px;background:#dbdbda"></div><div class="ab" style="left:20px;top:0.0px;width:10px;height:10.5px;background:#d9d8d8"></div><div class="ab" style="left:30px;top:0.0px;width:10px;height:10.5px;background:#d6d5d5"></div><div class="ab" style="left:40px;top:0.0px;width:10px;height:10.5px;background:#d3d2d4"></div><div class="ab" style="left:50px;top:0.0px;width:10px;height:10.5px;background:#dfdddd"></div><div class="ab" style="left:60px;top:0.0px;width:10px;height:10.5px;background:#d4d3d3"></div><div class="ab" style="left:70px;top:0.0px;width:10px;height:10.5px;background:#e0e0df"></div><div class="ab" style="left:80px;top:0.0px;width:10px;height:10.5px;background:#cfd0cf"></div><div class="ab" style="left:90px;top:0.0px;width:10px;height:10.5px;background:#d7d8d7"></div><div class="ab" style="left:100px;top:0.0px;width:10px;height:10.5px;background:#dddedd"></div><div class="ab" style="left:110px;top:0.0px;width:10px;height:10.5px;background:#cfcecf"></div><div class="ab" style="left:120px;top:0.0px;width:10px;height:10.5px;background:#d2d1d0"></div><div class="ab" style="left:0px;top:10.0px;width:10px;height:10.5px;background:#e6e5e5"></div><div class="ab" style="left:10px;top:10.0px;width:10px;height:10.5px;background:#f4f4f3"></div><div class="ab" style="left:20px;top:10.0px;width:10px;height:10.5px;background:#e6e6e5"></div><div class="ab" style="left:30px;top:10.0px;width:10px;height:10.5px;background:#e7e7e6"></div><div class="ab" style="left:40px;top:10.0px;width:10px;height:10.5px;background:#f8f8f6"></div><div class="ab" style="left:50px;top:10.0px;width:10px;height:10.5px;background:#e8eae9"></div><div class="ab" style="left:60px;top:10.0px;width:10px;height:10.5px;background:#e6e6e8"></div><div class="ab" style="left:70px;top:10.0px;width:10px;height:10.5px;background:#f3f3f3"></div><div class="ab" style="left:80px;top:10.0px;width:10px;height:10.5px;background:#edecec"></div><div class="ab" style="left:90px;top:10.0px;width:10px;height:10.5px;background:#f3f4f3"></div><div class="ab" style="left:100px;top:10.0px;width:10px;height:10.5px;background:#efefed"></div><div class="ab" style="left:110px;top:10.0px;width:10px;height:10.5px;background:#e7e9e7"></div><div class="ab" style="left:120px;top:10.0px;width:10px;height:10.5px;background:#eeecec"></div></div>
<div class="blur" style="left:236px;top:428px;width:28px;height:18px;background:#eeeeee;border-radius:8px"></div>
<div class="ab" style="left:669px;top:315px;width:91px;height:15px;border-radius:6px;overflow:hidden;filter:blur(0.6px);box-shadow:0 -3px 0 #d4dbe2"><div class="ab" style="left:0px;top:0.0px;width:10px;height:8.0px;background:#a2acb2"></div><div class="ab" style="left:10px;top:0.0px;width:10px;height:8.0px;background:#a0a9b1"></div><div class="ab" style="left:20px;top:0.0px;width:10px;height:8.0px;background:#b3bac2"></div><div class="ab" style="left:30px;top:0.0px;width:10px;height:8.0px;background:#9ca5ae"></div><div class="ab" style="left:40px;top:0.0px;width:10px;height:8.0px;background:#a6adb4"></div><div class="ab" style="left:50px;top:0.0px;width:10px;height:8.0px;background:#b0b9c2"></div><div class="ab" style="left:60px;top:0.0px;width:10px;height:8.0px;background:#afb5be"></div><div class="ab" style="left:70px;top:0.0px;width:10px;height:8.0px;background:#a0a6b0"></div><div class="ab" style="left:80px;top:0.0px;width:10px;height:8.0px;background:#a0a7af"></div><div class="ab" style="left:90px;top:0.0px;width:10px;height:8.0px;background:#9ca5ae"></div><div class="ab" style="left:0px;top:7.5px;width:10px;height:8.0px;background:#b4bbc3"></div><div class="ab" style="left:10px;top:7.5px;width:10px;height:8.0px;background:#9fa8af"></div><div class="ab" style="left:20px;top:7.5px;width:10px;height:8.0px;background:#b2bac3"></div><div class="ab" style="left:30px;top:7.5px;width:10px;height:8.0px;background:#adb5bc"></div><div class="ab" style="left:40px;top:7.5px;width:10px;height:8.0px;background:#aeb7c0"></div><div class="ab" style="left:50px;top:7.5px;width:10px;height:8.0px;background:#a7aeb5"></div><div class="ab" style="left:60px;top:7.5px;width:10px;height:8.0px;background:#9da7af"></div><div class="ab" style="left:70px;top:7.5px;width:10px;height:8.0px;background:#adb7be"></div><div class="ab" style="left:80px;top:7.5px;width:10px;height:8.0px;background:#adb5be"></div><div class="ab" style="left:90px;top:7.5px;width:10px;height:8.0px;background:#adb4bc"></div></div>
<div class="ab" style="left:677px;top:344px;width:83px;height:16px;border-radius:8px;overflow:hidden;filter:blur(0.6px);"><div class="ab" style="left:0px;top:0.0px;width:10px;height:8.5px;background:#e6e5e6"></div><div class="ab" style="left:10px;top:0.0px;width:10px;height:8.5px;background:#eeefef"></div><div class="ab" style="left:20px;top:0.0px;width:10px;height:8.5px;background:#ededee"></div><div class="ab" style="left:30px;top:0.0px;width:10px;height:8.5px;background:#e2e3e3"></div><div class="ab" style="left:40px;top:0.0px;width:10px;height:8.5px;background:#eff0ef"></div><div class="ab" style="left:50px;top:0.0px;width:10px;height:8.5px;background:#e1e0e1"></div><div class="ab" style="left:60px;top:0.0px;width:10px;height:8.5px;background:#e8e7e8"></div><div class="ab" style="left:70px;top:0.0px;width:10px;height:8.5px;background:#eff1f1"></div><div class="ab" style="left:80px;top:0.0px;width:10px;height:8.5px;background:#eeeded"></div><div class="ab" style="left:0px;top:8.0px;width:10px;height:8.5px;background:#dadbda"></div><div class="ab" style="left:10px;top:8.0px;width:10px;height:8.5px;background:#d7d7d8"></div><div class="ab" style="left:20px;top:8.0px;width:10px;height:8.5px;background:#cececf"></div><div class="ab" style="left:30px;top:8.0px;width:10px;height:8.5px;background:#d8d8da"></div><div class="ab" style="left:40px;top:8.0px;width:10px;height:8.5px;background:#d2d0d1"></div><div class="ab" style="left:50px;top:8.0px;width:10px;height:8.5px;background:#cbcac9"></div><div class="ab" style="left:60px;top:8.0px;width:10px;height:8.5px;background:#d0d1d0"></div><div class="ab" style="left:70px;top:8.0px;width:10px;height:8.5px;background:#cecfce"></div><div class="ab" style="left:80px;top:8.0px;width:10px;height:8.5px;background:#dbdada"></div></div>
<div class="ab" style="left:776px;top:346px;width:5px;height:11px;background:#dcdcfa"></div>
<div class="ab" style="left:669px;top:372px;width:91px;height:18px;border-radius:9px;overflow:hidden;filter:blur(0.6px);"><div class="ab" style="left:0px;top:0.0px;width:10px;height:9.5px;background:#edeced"></div><div class="ab" style="left:10px;top:0.0px;width:10px;height:9.5px;background:#e2e1e3"></div><div class="ab" style="left:20px;top:0.0px;width:10px;height:9.5px;background:#efeded"></div><div class="ab" style="left:30px;top:0.0px;width:10px;height:9.5px;background:#e6e6e7"></div><div class="ab" style="left:40px;top:0.0px;width:10px;height:9.5px;background:#e5e6e7"></div><div class="ab" style="left:50px;top:0.0px;width:10px;height:9.5px;background:#e8e8e8"></div><div class="ab" style="left:60px;top:0.0px;width:10px;height:9.5px;background:#ecedee"></div><div class="ab" style="left:70px;top:0.0px;width:10px;height:9.5px;background:#ededee"></div><div class="ab" style="left:80px;top:0.0px;width:10px;height:9.5px;background:#eaeae9"></div><div class="ab" style="left:90px;top:0.0px;width:10px;height:9.5px;background:#e6e5e4"></div><div class="ab" style="left:0px;top:9.0px;width:10px;height:9.5px;background:#e0e1e2"></div><div class="ab" style="left:10px;top:9.0px;width:10px;height:9.5px;background:#e4e3e3"></div><div class="ab" style="left:20px;top:9.0px;width:10px;height:9.5px;background:#d8d7d7"></div><div class="ab" style="left:30px;top:9.0px;width:10px;height:9.5px;background:#e5e4e3"></div><div class="ab" style="left:40px;top:9.0px;width:10px;height:9.5px;background:#e1e3e2"></div><div class="ab" style="left:50px;top:9.0px;width:10px;height:9.5px;background:#d5d3d4"></div><div class="ab" style="left:60px;top:9.0px;width:10px;height:9.5px;background:#d7d8d8"></div><div class="ab" style="left:70px;top:9.0px;width:10px;height:9.5px;background:#dfdfde"></div><div class="ab" style="left:80px;top:9.0px;width:10px;height:9.5px;background:#d6d7d7"></div><div class="ab" style="left:90px;top:9.0px;width:10px;height:9.5px;background:#e0e1e1"></div></div>
<div class="ab" style="left:676px;top:397px;width:84px;height:22px;border-radius:9px;overflow:hidden;filter:blur(0.6px);"><div class="ab" style="left:0px;top:0.0px;width:10px;height:11.5px;background:#eae8ea"></div><div class="ab" style="left:10px;top:0.0px;width:10px;height:11.5px;background:#dbdddd"></div><div class="ab" style="left:20px;top:0.0px;width:10px;height:11.5px;background:#e2e4e2"></div><div class="ab" style="left:30px;top:0.0px;width:10px;height:11.5px;background:#e6e8e8"></div><div class="ab" style="left:40px;top:0.0px;width:10px;height:11.5px;background:#dddcde"></div><div class="ab" style="left:50px;top:0.0px;width:10px;height:11.5px;background:#e2e2e3"></div><div class="ab" style="left:60px;top:0.0px;width:10px;height:11.5px;background:#dbdbdb"></div><div class="ab" style="left:70px;top:0.0px;width:10px;height:11.5px;background:#e6e6e8"></div><div class="ab" style="left:80px;top:0.0px;width:10px;height:11.5px;background:#e8e8e6"></div><div class="ab" style="left:0px;top:11.0px;width:10px;height:11.5px;background:#e8e8ea"></div><div class="ab" style="left:10px;top:11.0px;width:10px;height:11.5px;background:#f1f1ef"></div><div class="ab" style="left:20px;top:11.0px;width:10px;height:11.5px;background:#f4f2f2"></div><div class="ab" style="left:30px;top:11.0px;width:10px;height:11.5px;background:#f3f2f2"></div><div class="ab" style="left:40px;top:11.0px;width:10px;height:11.5px;background:#edebec"></div><div class="ab" style="left:50px;top:11.0px;width:10px;height:11.5px;background:#eeeeec"></div><div class="ab" style="left:60px;top:11.0px;width:10px;height:11.5px;background:#e6e6e7"></div><div class="ab" style="left:70px;top:11.0px;width:10px;height:11.5px;background:#eeedee"></div><div class="ab" style="left:80px;top:11.0px;width:10px;height:11.5px;background:#ececeb"></div></div>
<div class="ab" style="left:668px;top:428px;width:92px;height:20px;border-radius:9px;overflow:hidden;filter:blur(0.6px);"><div class="ab" style="left:0px;top:0.0px;width:10px;height:10.5px;background:#d6d5d5"></div><div class="ab" style="left:10px;top:0.0px;width:10px;height:10.5px;background:#d7d6d7"></div><div class="ab" style="left:20px;top:0.0px;width:10px;height:10.5px;background:#d4d3d2"></div><div class="ab" style="left:30px;top:0.0px;width:10px;height:10.5px;background:#d6d5d7"></div><div class="ab" style="left:40px;top:0.0px;width:10px;height:10.5px;background:#cccccb"></div><div class="ab" style="left:50px;top:0.0px;width:10px;height:10.5px;background:#d2d4d3"></div><div class="ab" style="left:60px;top:0.0px;width:10px;height:10.5px;background:#d2d0d2"></div><div class="ab" style="left:70px;top:0.0px;width:10px;height:10.5px;background:#d3d3d3"></div><div class="ab" style="left:80px;top:0.0px;width:10px;height:10.5px;background:#cfcdcf"></div><div class="ab" style="left:90px;top:0.0px;width:10px;height:10.5px;background:#cbcbca"></div><div class="ab" style="left:0px;top:10.0px;width:10px;height:10.5px;background:#eeecec"></div><div class="ab" style="left:10px;top:10.0px;width:10px;height:10.5px;background:#ebeceb"></div><div class="ab" style="left:20px;top:10.0px;width:10px;height:10.5px;background:#e6e6e8"></div><div class="ab" style="left:30px;top:10.0px;width:10px;height:10.5px;background:#eeeeed"></div><div class="ab" style="left:40px;top:10.0px;width:10px;height:10.5px;background:#e7e7e7"></div><div class="ab" style="left:50px;top:10.0px;width:10px;height:10.5px;background:#ebeceb"></div><div class="ab" style="left:60px;top:10.0px;width:10px;height:10.5px;background:#e5e7e7"></div><div class="ab" style="left:70px;top:10.0px;width:10px;height:10.5px;background:#efeeed"></div><div class="ab" style="left:80px;top:10.0px;width:10px;height:10.5px;background:#edeeef"></div><div class="ab" style="left:90px;top:10.0px;width:10px;height:10.5px;background:#e5e5e6"></div></div>
<div class="blur" style="left:756px;top:430px;width:30px;height:17px;background:#f0f0f0;border-radius:8px"></div>
<div class="ab" style="left:681px;top:458px;width:79px;height:15px;border-radius:8px;overflow:hidden;filter:blur(0.6px);"><div class="ab" style="left:0px;top:0.0px;width:10px;height:8.0px;background:#d7d6d7"></div><div class="ab" style="left:10px;top:0.0px;width:10px;height:8.0px;background:#d8dad8"></div><div class="ab" style="left:20px;top:0.0px;width:10px;height:8.0px;background:#dcdede"></div><div class="ab" style="left:30px;top:0.0px;width:10px;height:8.0px;background:#d9d7d9"></div><div class="ab" style="left:40px;top:0.0px;width:10px;height:8.0px;background:#d1d0d1"></div><div class="ab" style="left:50px;top:0.0px;width:10px;height:8.0px;background:#d8d7d6"></div><div class="ab" style="left:60px;top:0.0px;width:10px;height:8.0px;background:#d1d1d2"></div><div class="ab" style="left:70px;top:0.0px;width:10px;height:8.0px;background:#dcdcdc"></div><div class="ab" style="left:0px;top:7.5px;width:10px;height:8.0px;background:#eaeaea"></div><div class="ab" style="left:10px;top:7.5px;width:10px;height:8.0px;background:#f4f4f4"></div><div class="ab" style="left:20px;top:7.5px;width:10px;height:8.0px;background:#eaebe9"></div><div class="ab" style="left:30px;top:7.5px;width:10px;height:8.0px;background:#f6f5f5"></div><div class="ab" style="left:40px;top:7.5px;width:10px;height:8.0px;background:#e8e7e6"></div><div class="ab" style="left:50px;top:7.5px;width:10px;height:8.0px;background:#f4f3f4"></div><div class="ab" style="left:60px;top:7.5px;width:10px;height:8.0px;background:#eae9ea"></div><div class="ab" style="left:70px;top:7.5px;width:10px;height:8.0px;background:#f0f1f1"></div></div>
<div class="ab" style="left:679px;top:484px;width:81px;height:19px;border-radius:9px;overflow:hidden;filter:blur(0.6px);"><div class="ab" style="left:0px;top:0.0px;width:10px;height:10.0px;background:#e3e4e3"></div><div class="ab" style="left:10px;top:0.0px;width:10px;height:10.0px;background:#e5e5e5"></div><div class="ab" style="left:20px;top:0.0px;width:10px;height:10.0px;background:#dddedd"></div><div class="ab" style="left:30px;top:0.0px;width:10px;height:10.0px;background:#e3e1e1"></div><div class="ab" style="left:40px;top:0.0px;width:10px;height:10.0px;background:#e5e3e3"></div><div class="ab" style="left:50px;top:0.0px;width:10px;height:10.0px;background:#e7e9e7"></div><div class="ab" style="left:60px;top:0.0px;width:10px;height:10.0px;background:#e5e5e7"></div><div class="ab" style="left:70px;top:0.0px;width:10px;height:10.0px;background:#e5e5e7"></div><div class="ab" style="left:80px;top:0.0px;width:10px;height:10.0px;background:#ddddde"></div><div class="ab" style="left:0px;top:9.5px;width:10px;height:10.0px;background:#d6d5d4"></div><div class="ab" style="left:10px;top:9.5px;width:10px;height:10.0px;background:#d3d2d2"></div><div class="ab" style="left:20px;top:9.5px;width:10px;height:10.0px;background:#dcdadc"></div><div class="ab" style="left:30px;top:9.5px;width:10px;height:10.0px;background:#d0d0d0"></div><div class="ab" style="left:40px;top:9.5px;width:10px;height:10.0px;background:#dfddde"></div><div class="ab" style="left:50px;top:9.5px;width:10px;height:10.0px;background:#dddfdd"></div><div class="ab" style="left:60px;top:9.5px;width:10px;height:10.0px;background:#dededf"></div><div class="ab" style="left:70px;top:9.5px;width:10px;height:10.0px;background:#cdcece"></div><div class="ab" style="left:80px;top:9.5px;width:10px;height:10.0px;background:#dcdadb"></div></div>
<div class="ab" style="left:776px;top:487px;width:20px;height:14px;background:#e4e4e4;border-radius:6px;filter:blur(0.6px)"></div>
<div class="ab" style="left:678px;top:511px;width:82px;height:19px;border-radius:9px;overflow:hidden;filter:blur(0.6px);"><div class="ab" style="left:0px;top:0.0px;width:10px;height:10.0px;background:#ededee"></div><div class="ab" style="left:10px;top:0.0px;width:10px;height:10.0px;background:#e3e3e4"></div><div class="ab" style="left:20px;top:0.0px;width:10px;height:10.0px;background:#eaebeb"></div><div class="ab" style="left:30px;top:0.0px;width:10px;height:10.0px;background:#e9eaea"></div><div class="ab" style="left:40px;top:0.0px;width:10px;height:10.0px;background:#eceeec"></div><div class="ab" style="left:50px;top:0.0px;width:10px;height:10.0px;background:#e6e6e5"></div><div class="ab" style="left:60px;top:0.0px;width:10px;height:10.0px;background:#ededed"></div><div class="ab" style="left:70px;top:0.0px;width:10px;height:10.0px;background:#eeeced"></div><div class="ab" style="left:80px;top:0.0px;width:10px;height:10.0px;background:#edeeed"></div><div class="ab" style="left:0px;top:9.5px;width:10px;height:10.0px;background:#e2e4e3"></div><div class="ab" style="left:10px;top:9.5px;width:10px;height:10.0px;background:#d9d9d9"></div><div class="ab" style="left:20px;top:9.5px;width:10px;height:10.0px;background:#e4e6e6"></div><div class="ab" style="left:30px;top:9.5px;width:10px;height:10.0px;background:#e2e4e2"></div><div class="ab" style="left:40px;top:9.5px;width:10px;height:10.0px;background:#e3e1e2"></div><div class="ab" style="left:50px;top:9.5px;width:10px;height:10.0px;background:#e4e3e4"></div><div class="ab" style="left:60px;top:9.5px;width:10px;height:10.0px;background:#d9dad9"></div><div class="ab" style="left:70px;top:9.5px;width:10px;height:10.0px;background:#e2e4e4"></div><div class="ab" style="left:80px;top:9.5px;width:10px;height:10.0px;background:#dddfde"></div></div>
<div class="ab" style="left:678px;top:540px;width:82px;height:20px;border-radius:9px;overflow:hidden;filter:blur(0.6px);"><div class="ab" style="left:0px;top:0.0px;width:10px;height:10.5px;background:#d6d7d8"></div><div class="ab" style="left:10px;top:0.0px;width:10px;height:10.5px;background:#dadbdc"></div><div class="ab" style="left:20px;top:0.0px;width:10px;height:10.5px;background:#d7d8d8"></div><div class="ab" style="left:30px;top:0.0px;width:10px;height:10.5px;background:#d1d1d1"></div><div class="ab" style="left:40px;top:0.0px;width:10px;height:10.5px;background:#d7d7d8"></div><div class="ab" style="left:50px;top:0.0px;width:10px;height:10.5px;background:#d9d9d8"></div><div class="ab" style="left:60px;top:0.0px;width:10px;height:10.5px;background:#d4d6d6"></div><div class="ab" style="left:70px;top:0.0px;width:10px;height:10.5px;background:#dbdbdd"></div><div class="ab" style="left:80px;top:0.0px;width:10px;height:10.5px;background:#cfd1d1"></div><div class="ab" style="left:0px;top:10.0px;width:10px;height:10.5px;background:#eaeaea"></div><div class="ab" style="left:10px;top:10.0px;width:10px;height:10.5px;background:#edeeee"></div><div class="ab" style="left:20px;top:10.0px;width:10px;height:10.5px;background:#efefed"></div><div class="ab" style="left:30px;top:10.0px;width:10px;height:10.5px;background:#e4e4e6"></div><div class="ab" style="left:40px;top:10.0px;width:10px;height:10.5px;background:#e6e4e5"></div><div class="ab" style="left:50px;top:10.0px;width:10px;height:10.5px;background:#f3f2f2"></div><div class="ab" style="left:60px;top:10.0px;width:10px;height:10.5px;background:#f2f2f1"></div><div class="ab" style="left:70px;top:10.0px;width:10px;height:10.5px;background:#f3f4f4"></div><div class="ab" style="left:80px;top:10.0px;width:10px;height:10.5px;background:#e7e8e8"></div></div>
<div class="ab" style="left:42px;top:311px;width:61px;height:27px;border:1px dotted #0000ff"></div>
<div class="ab" style="left:31px;top:320px;width:0;height:0;border-top:4px solid transparent;border-bottom:4px solid transparent;border-left:4px solid #444"></div>
<div class="ab" style="left:1872px;top:311px;width:17px;height:260px;background:#f0f0f0"></div>
<div class="ab" style="left:1872px;top:328px;width:17px;height:16px;background:#cdcdcd"></div>
<svg class="ab" style="left:1876px;top:314px" width="9" height="9" viewBox="0 0 9 9"><path d="M1 6.5 L4.5 3 L8 6.5" fill="none" stroke="#606060" stroke-width="1.5"/></svg>
<div class="ab" style="left:1889px;top:284px;width:1px;height:290px;background:#a0a0a0"></div>
<div class="ab" style="left:1433px;top:272px;width:88px;height:291px;border:3px solid #f5312f"></div>
<svg class="ab" style="left:0;top:0" width="1910" height="564" viewBox="0 0 1910 564">
<path d="M138 100.3 L161.6 92 L161 98.3 L336.5 126.6 L159.4 108 L158.5 114 Z" fill="#f83434"/>
<path d="M1151.5 221.2 L1369.8 279.4 L1370.4 275.2 L1389 292 L1363.8 296.5 L1362.5 290.6 L1151.5 223.2 Z" fill="#f83434"/>
</svg>
</body></html>
